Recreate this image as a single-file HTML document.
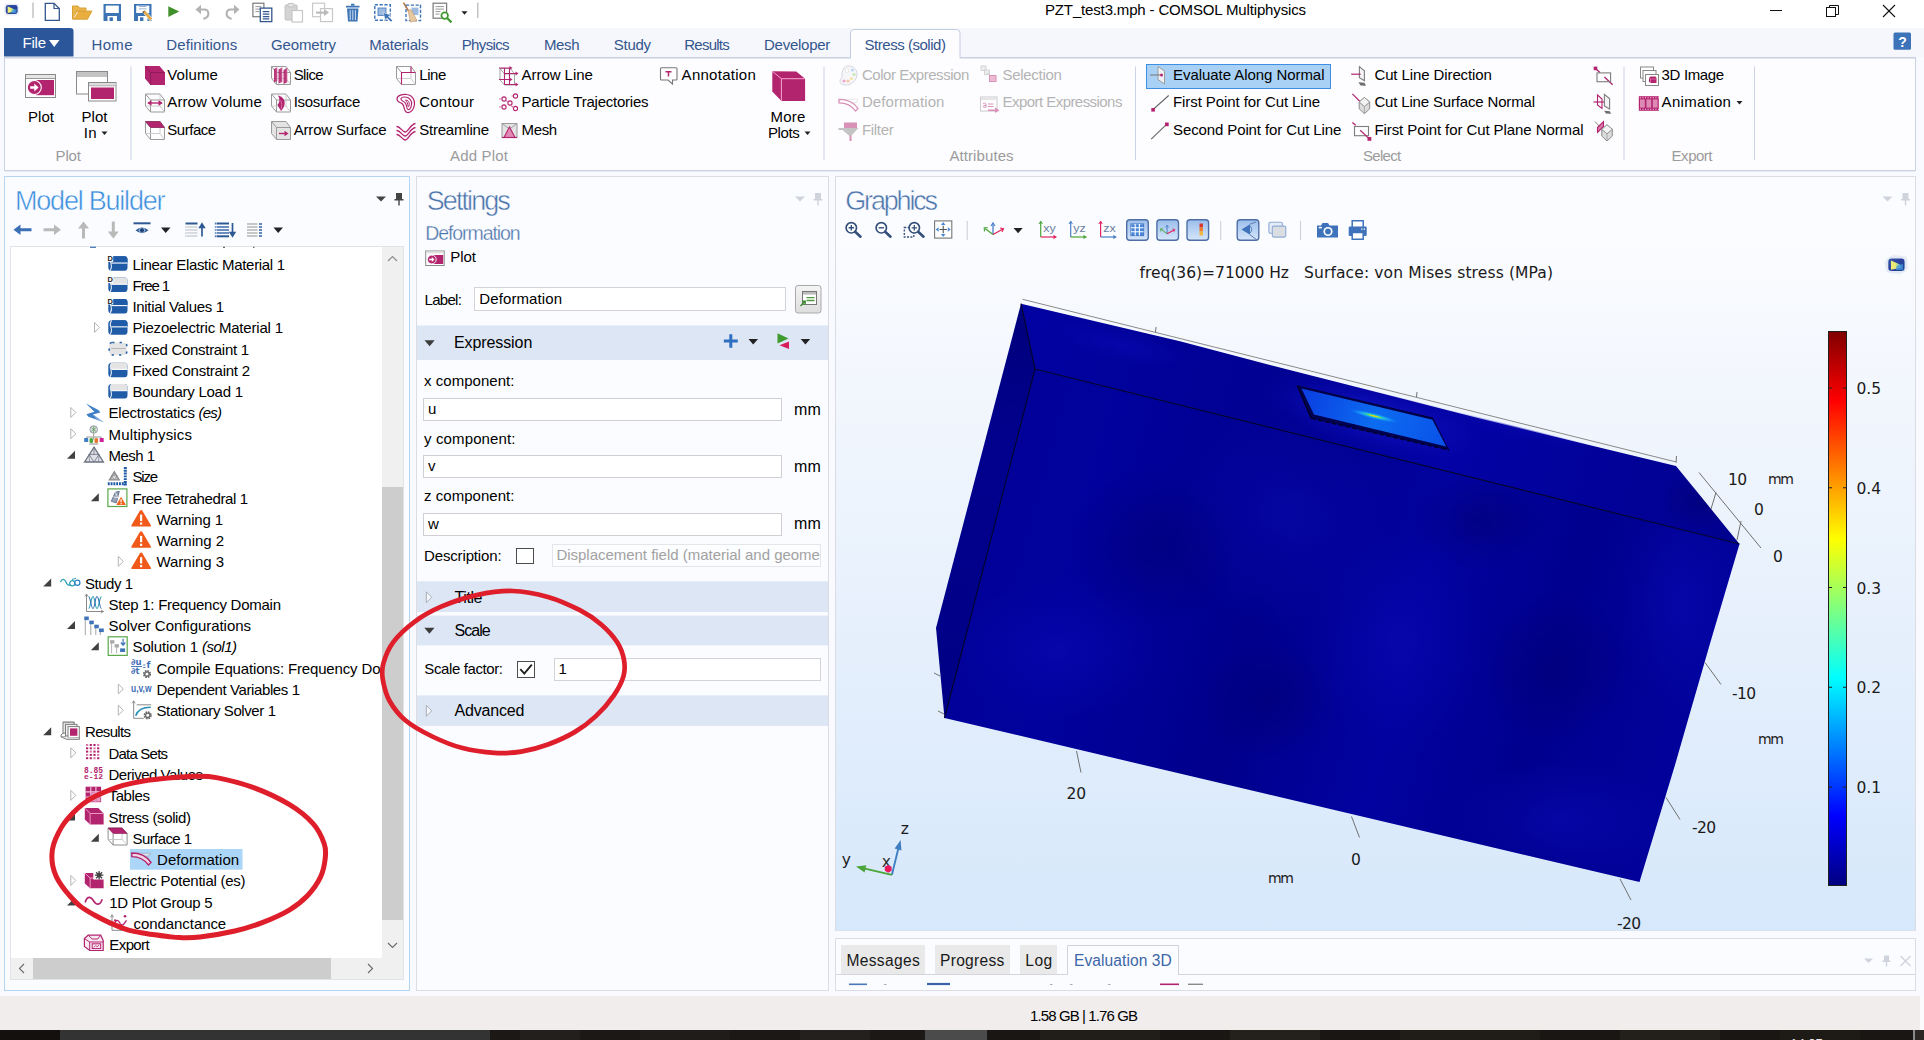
<!DOCTYPE html>
<html lang="en"><head><meta charset="utf-8"><title>PZT_test3.mph - COMSOL Multiphysics</title>
<style>
html,body{margin:0;padding:0;background:#f9faff;overflow:hidden}
body{width:1924px;height:1040px;position:relative;font-family:"Liberation Sans",sans-serif}
svg{position:absolute;left:0;top:0;display:block}
text{white-space:pre}
</style></head><body>
<svg width="1924" height="1040" viewBox="0 0 1924 1040">
<defs>
<linearGradient id="cl" x1="0" x2="1" y1="0" y2="0"><stop offset="0" stop-color="#f2ee7a"/><stop offset=".45" stop-color="#e6ea72"/><stop offset=".75" stop-color="#7cc8b0"/><stop offset="1" stop-color="#3a8ad8"/></linearGradient>
<linearGradient id="clb" x1="0" x2="1" y1="0" y2="1"><stop offset="0" stop-color="#3858a8"/><stop offset=".5" stop-color="#2a3f9c"/><stop offset="1" stop-color="#184a94"/></linearGradient>
<linearGradient id="btn" x1="0" x2="0" y1="0" y2="1"><stop offset="0" stop-color="#f4f4f4"/><stop offset="1" stop-color="#dedede"/></linearGradient>
<linearGradient id="tg" x1="0" x2="0" y1="0" y2="1"><stop offset="0" stop-color="#9bbdec"/><stop offset=".5" stop-color="#b7d2f4"/><stop offset="1" stop-color="#d6e6fa"/></linearGradient>
<linearGradient id="cv" x1="0" x2="0" y1="0" y2="1"><stop offset="0" stop-color="#fafbfe"/><stop offset="0.3" stop-color="#eff5fd"/><stop offset="0.65" stop-color="#e3eefc"/><stop offset="1" stop-color="#d6e8fb"/></linearGradient>
<linearGradient id="fr" gradientUnits="userSpaceOnUse" x1="950" y1="500" x2="1700" y2="700"><stop offset="0" stop-color="#020298"/><stop offset="0.18" stop-color="#01019d"/><stop offset="0.42" stop-color="#00008c"/><stop offset="0.62" stop-color="#0202a0"/><stop offset="0.8" stop-color="#00008e"/><stop offset="1" stop-color="#02029c"/></linearGradient>
<linearGradient id="tp" gradientUnits="userSpaceOnUse" x1="1030" y1="330" x2="1720" y2="520"><stop offset="0" stop-color="#0202a2"/><stop offset="0.35" stop-color="#010192"/><stop offset="0.6" stop-color="#0303a6"/><stop offset="1" stop-color="#010190"/></linearGradient>
<linearGradient id="lf" gradientUnits="userSpaceOnUse" x1="1025" y1="310" x2="940" y2="700"><stop offset="0" stop-color="#00007c"/><stop offset="0.35" stop-color="#01018e"/><stop offset="1" stop-color="#000086"/></linearGradient>
<radialGradient id="gl1"><stop offset="0" stop-color="#0a0ab4" stop-opacity=".55"/><stop offset="1" stop-color="#0a0ab4" stop-opacity="0"/></radialGradient>
<radialGradient id="gl2"><stop offset="0" stop-color="#000070" stop-opacity=".5"/><stop offset="1" stop-color="#000070" stop-opacity="0"/></radialGradient>
<clipPath id="cfr"><path d="M1035,369 L1739.5,544 L1639.5,882 L944.5,718 Z"/></clipPath>
<clipPath id="ctp"><path d="M1021,303.7 L1676,466 L1739.5,544 L1035,369 Z"/></clipPath>
<radialGradient id="gl3"><stop offset="0" stop-color="#1a2ad8" stop-opacity=".7"/><stop offset="0.6" stop-color="#1010c0" stop-opacity=".35"/><stop offset="1" stop-color="#0a0ab4" stop-opacity="0"/></radialGradient>
<linearGradient id="sl" gradientUnits="userSpaceOnUse" x1="1300" y1="390" x2="1450" y2="445"><stop offset="0" stop-color="#0a3ce0"/><stop offset="0.5" stop-color="#0c6cf0"/><stop offset="1" stop-color="#0a50e8"/></linearGradient>
<radialGradient id="hot"><stop offset="0" stop-color="#e08020"/><stop offset="0.12" stop-color="#e0e020"/><stop offset="0.3" stop-color="#30e0a0" stop-opacity=".9"/><stop offset="0.6" stop-color="#20c0ff" stop-opacity=".5"/><stop offset="1" stop-color="#1080ff" stop-opacity="0"/></radialGradient>
<linearGradient id="jet" x1="0" x2="0" y1="1" y2="0"><stop offset="0" stop-color="#000080"/><stop offset="0.125" stop-color="#0000ff"/><stop offset="0.375" stop-color="#00ffff"/><stop offset="0.625" stop-color="#ffff00"/><stop offset="0.875" stop-color="#ff0000"/><stop offset="1" stop-color="#800000"/></linearGradient>
</defs>
<rect x="0" y="0" width="1924" height="1040" fill="#f9faff"/>
<rect x="0" y="0" width="1924" height="28" fill="#ffffff"/>
<rect x="0" y="28" width="1924" height="29" fill="#f6f7fc"/>
<rect x="4.5" y="57.5" width="1911" height="113" fill="#fdfdff" stroke="#c9d1e2" stroke-width="1"/>
<rect x="1916" y="57" width="8" height="114" fill="#f9faff"/>
<rect x="0" y="171" width="1924" height="6" fill="#f9faff"/>
<rect x="0" y="996" width="1920" height="34" fill="#f0edec"/>
<rect x="1920" y="996" width="4" height="34" fill="#fbfbfd"/>
<rect x="0" y="1030" width="1924" height="10" fill="#181513"/>
<rect x="0" y="1030" width="60" height="10" fill="#13100e"/>
<rect x="60" y="1030" width="430" height="10" fill="#333333"/>
<rect x="490" y="1030" width="435" height="10" fill="#1b1816"/>
<rect x="925" y="1030" width="62" height="10" fill="#4b4b4b"/>
<rect x="987" y="1030" width="926" height="10" fill="#191613"/>
<rect x="520" y="1030" width="60" height="10" fill="#26221f" opacity=".8"/>
<rect x="640" y="1030" width="90" height="10" fill="#221e1b" opacity=".8"/>
<rect x="800" y="1030" width="70" height="10" fill="#27231f" opacity=".8"/>
<rect x="1040" y="1030" width="120" height="10" fill="#231f1c" opacity=".8"/>
<rect x="1230" y="1030" width="90" height="10" fill="#27231f" opacity=".8"/>
<rect x="1400" y="1030" width="140" height="10" fill="#221e1a" opacity=".8"/>
<rect x="1620" y="1030" width="100" height="10" fill="#26221e" opacity=".8"/>
<rect x="1780" y="1030" width="80" height="10" fill="#1f1b18" opacity=".8"/>
<rect x="1913" y="1030" width="2" height="10" fill="#8a8a8a"/>
<rect x="1915" y="1030" width="9" height="10" fill="#2a2725"/>
<rect x="4.5" y="176.5" width="405" height="814" fill="#fbfcff" stroke="#b5d4f1" stroke-width="1"/>
<rect x="416.5" y="176.5" width="412" height="814" fill="#fbfcff" stroke="#dcdde3" stroke-width="1"/>
<rect x="835.5" y="176.5" width="1080" height="754" fill="#fbfcff" stroke="#dcdde3" stroke-width="1"/>
<rect x="835.5" y="938.5" width="1080" height="52" fill="#fbfcff" stroke="#dcdde3" stroke-width="1"/>
<text x="1045" y="15" font-family="'Liberation Sans',sans-serif" font-size="15" fill="#000" textLength="261.0" lengthAdjust="spacing">PZT_test3.mph - COMSOL Multiphysics</text>
<line x1="1770" y1="10.5" x2="1782" y2="10.5" stroke="#111" stroke-width="1"/>
<rect x="1826.5" y="7.5" width="9" height="9" fill="none" stroke="#111" stroke-width="1"/>
<path d="M1829.5,7.5 V5.5 H1838.5 V14.5 H1835.5" fill="none" stroke="#111" stroke-width="1"/>
<line x1="1883" y1="5" x2="1895" y2="17" stroke="#111" stroke-width="1.1"/>
<line x1="1895" y1="5" x2="1883" y2="17" stroke="#111" stroke-width="1.1"/>
<rect x="1893.5" y="32.5" width="17.5" height="17.3" fill="#3c73b9" rx="1.5"/>
<text x="1902.5" y="46.5" font-family="'Liberation Sans',sans-serif" font-size="14" fill="#fff" text-anchor="middle" font-weight="bold">?</text>
<path d="M4,28 H70 Q73.5,28 73.5,31 V56.5 H4 Z" fill="#2b579a"/>
<text x="22.5" y="48.3" font-family="'Liberation Sans',sans-serif" font-size="15" fill="#fff" textLength="23.5" lengthAdjust="spacing">File</text>
<path d="M49,40 H59.5 L54.2,47 Z" fill="#fff"/>
<text x="91.5" y="50" font-family="'Liberation Sans',sans-serif" font-size="15" fill="#33568e" textLength="41.0" lengthAdjust="spacing">Home</text>
<text x="166.3" y="50" font-family="'Liberation Sans',sans-serif" font-size="15" fill="#33568e" textLength="70.9" lengthAdjust="spacing">Definitions</text>
<text x="271" y="50" font-family="'Liberation Sans',sans-serif" font-size="15" fill="#33568e" textLength="65.0" lengthAdjust="spacing">Geometry</text>
<text x="369.3" y="50" font-family="'Liberation Sans',sans-serif" font-size="15" fill="#33568e" textLength="59.2" lengthAdjust="spacing">Materials</text>
<text x="461.7" y="50" font-family="'Liberation Sans',sans-serif" font-size="15" fill="#33568e" textLength="47.9" lengthAdjust="spacing">Physics</text>
<text x="544" y="50" font-family="'Liberation Sans',sans-serif" font-size="15" fill="#33568e" textLength="35.5" lengthAdjust="spacing">Mesh</text>
<text x="613.8" y="50" font-family="'Liberation Sans',sans-serif" font-size="15" fill="#33568e" textLength="37.2" lengthAdjust="spacing">Study</text>
<text x="684.2" y="50" font-family="'Liberation Sans',sans-serif" font-size="15" fill="#33568e" textLength="45.6" lengthAdjust="spacing">Results</text>
<text x="764" y="50" font-family="'Liberation Sans',sans-serif" font-size="15" fill="#33568e" textLength="66.3" lengthAdjust="spacing">Developer</text>
<line x1="5" y1="58.4" x2="1915" y2="58.4" stroke="#dde2ee" stroke-width="1"/>
<line x1="5" y1="171.4" x2="1915" y2="171.4" stroke="#e2e6f0" stroke-width="1"/>
<path d="M850.5,57.5 V33 Q850.5,29.5 854,29.5 H956.5 Q960,29.5 960,33 V57.5" fill="#fdfdff" stroke="#c3cde0" stroke-width="1"/>
<rect x="851" y="57" width="108.5" height="2.2" fill="#fdfdff"/>
<text x="864.5" y="50" font-family="'Liberation Sans',sans-serif" font-size="15" fill="#33568e" textLength="81.5" lengthAdjust="spacing">Stress (solid)</text>
<line x1="131" y1="66.5" x2="131" y2="160" stroke="#ccd3e4" stroke-width="1"/>
<line x1="824" y1="66.5" x2="824" y2="160" stroke="#ccd3e4" stroke-width="1"/>
<line x1="1135.5" y1="66.5" x2="1135.5" y2="160" stroke="#ccd3e4" stroke-width="1"/>
<line x1="1624" y1="66.5" x2="1624" y2="160" stroke="#ccd3e4" stroke-width="1"/>
<line x1="1754.5" y1="66.5" x2="1754.5" y2="160" stroke="#ccd3e4" stroke-width="1"/>
<text x="55.6" y="161" font-family="'Liberation Sans',sans-serif" font-size="15" fill="#9b9b9b" textLength="25.2" lengthAdjust="spacing">Plot</text>
<text x="450" y="161" font-family="'Liberation Sans',sans-serif" font-size="15" fill="#9b9b9b" textLength="58.0" lengthAdjust="spacing">Add Plot</text>
<text x="949.4" y="161" font-family="'Liberation Sans',sans-serif" font-size="15" fill="#9b9b9b" textLength="64.2" lengthAdjust="spacing">Attributes</text>
<text x="1363" y="161" font-family="'Liberation Sans',sans-serif" font-size="15" fill="#9b9b9b" textLength="38.2" lengthAdjust="spacing">Select</text>
<text x="1671.6" y="161" font-family="'Liberation Sans',sans-serif" font-size="15" fill="#9b9b9b" textLength="40.9" lengthAdjust="spacing">Export</text>
<text x="28" y="122" font-family="'Liberation Sans',sans-serif" font-size="15" fill="#000" textLength="26.0" lengthAdjust="spacing">Plot</text>
<text x="81.5" y="122" font-family="'Liberation Sans',sans-serif" font-size="15" fill="#000" textLength="26.0" lengthAdjust="spacing">Plot</text>
<text x="83.8" y="138" font-family="'Liberation Sans',sans-serif" font-size="15" fill="#000" textLength="12.7" lengthAdjust="spacing">In</text>
<path d="M101.5,131.5 H107.5 L104.5,135 Z" fill="#222"/>
<text x="770.4" y="122" font-family="'Liberation Sans',sans-serif" font-size="15" fill="#000" textLength="35.0" lengthAdjust="spacing">More</text>
<text x="768" y="138" font-family="'Liberation Sans',sans-serif" font-size="15" fill="#000" textLength="31.7" lengthAdjust="spacing">Plots</text>
<path d="M804.5,131.5 H810.5 L807.5,135 Z" fill="#222"/>
<text x="167.3" y="79.8" font-family="'Liberation Sans',sans-serif" font-size="15" fill="#000" textLength="50.6" lengthAdjust="spacing">Volume</text>
<text x="167.3" y="107.4" font-family="'Liberation Sans',sans-serif" font-size="15" fill="#000" textLength="94.5" lengthAdjust="spacing">Arrow Volume</text>
<text x="167.3" y="134.8" font-family="'Liberation Sans',sans-serif" font-size="15" fill="#000" textLength="48.9" lengthAdjust="spacing">Surface</text>
<text x="293.7" y="79.8" font-family="'Liberation Sans',sans-serif" font-size="15" fill="#000" textLength="30.0" lengthAdjust="spacing">Slice</text>
<text x="293.7" y="107.4" font-family="'Liberation Sans',sans-serif" font-size="15" fill="#000" textLength="66.6" lengthAdjust="spacing">Isosurface</text>
<text x="293.7" y="134.8" font-family="'Liberation Sans',sans-serif" font-size="15" fill="#000" textLength="92.9" lengthAdjust="spacing">Arrow Surface</text>
<text x="419.2" y="79.8" font-family="'Liberation Sans',sans-serif" font-size="15" fill="#000" textLength="27.2" lengthAdjust="spacing">Line</text>
<text x="419.2" y="107.4" font-family="'Liberation Sans',sans-serif" font-size="15" fill="#000" textLength="54.8" lengthAdjust="spacing">Contour</text>
<text x="419.2" y="134.8" font-family="'Liberation Sans',sans-serif" font-size="15" fill="#000" textLength="69.8" lengthAdjust="spacing">Streamline</text>
<text x="521.6" y="79.8" font-family="'Liberation Sans',sans-serif" font-size="15" fill="#000" textLength="71.2" lengthAdjust="spacing">Arrow Line</text>
<text x="521.6" y="107.4" font-family="'Liberation Sans',sans-serif" font-size="15" fill="#000" textLength="126.9" lengthAdjust="spacing">Particle Trajectories</text>
<text x="521.6" y="134.8" font-family="'Liberation Sans',sans-serif" font-size="15" fill="#000" textLength="35.6" lengthAdjust="spacing">Mesh</text>
<text x="681.6" y="79.8" font-family="'Liberation Sans',sans-serif" font-size="15" fill="#000" textLength="74.2" lengthAdjust="spacing">Annotation</text>
<text x="861.9" y="79.8" font-family="'Liberation Sans',sans-serif" font-size="15" fill="#b4b4b4" textLength="107.4" lengthAdjust="spacing">Color Expression</text>
<text x="861.9" y="107.4" font-family="'Liberation Sans',sans-serif" font-size="15" fill="#b4b4b4" textLength="82.5" lengthAdjust="spacing">Deformation</text>
<text x="861.9" y="134.8" font-family="'Liberation Sans',sans-serif" font-size="15" fill="#b4b4b4" textLength="31.9" lengthAdjust="spacing">Filter</text>
<text x="1002.6" y="79.8" font-family="'Liberation Sans',sans-serif" font-size="15" fill="#b4b4b4" textLength="59.2" lengthAdjust="spacing">Selection</text>
<text x="1002.6" y="107.4" font-family="'Liberation Sans',sans-serif" font-size="15" fill="#b4b4b4" textLength="119.8" lengthAdjust="spacing">Export Expressions</text>
<rect x="1146.5" y="64.5" width="184" height="24" fill="#a9d1f5" stroke="#3d8fe4" stroke-width="1"/>
<text x="1173" y="79.8" font-family="'Liberation Sans',sans-serif" font-size="15" fill="#000" textLength="151.5" lengthAdjust="spacing">Evaluate Along Normal</text>
<text x="1173" y="107.4" font-family="'Liberation Sans',sans-serif" font-size="15" fill="#000" textLength="147.2" lengthAdjust="spacing">First Point for Cut Line</text>
<text x="1173" y="134.8" font-family="'Liberation Sans',sans-serif" font-size="15" fill="#000" textLength="168.3" lengthAdjust="spacing">Second Point for Cut Line</text>
<text x="1374.4" y="79.8" font-family="'Liberation Sans',sans-serif" font-size="15" fill="#000" textLength="117.5" lengthAdjust="spacing">Cut Line Direction</text>
<text x="1374.4" y="107.4" font-family="'Liberation Sans',sans-serif" font-size="15" fill="#000" textLength="160.6" lengthAdjust="spacing">Cut Line Surface Normal</text>
<text x="1374.4" y="134.8" font-family="'Liberation Sans',sans-serif" font-size="15" fill="#000" textLength="209.2" lengthAdjust="spacing">First Point for Cut Plane Normal</text>
<text x="1661.6" y="79.8" font-family="'Liberation Sans',sans-serif" font-size="15" fill="#000" textLength="62.6" lengthAdjust="spacing">3D Image</text>
<text x="1661.6" y="107.4" font-family="'Liberation Sans',sans-serif" font-size="15" fill="#000" textLength="69.3" lengthAdjust="spacing">Animation</text>
<path d="M1736.5,101 H1742.5 L1739.5,104.5 Z" fill="#222"/>
<g transform="translate(25 74)"><rect x="0.5" y="0.5" width="30" height="23" fill="#fff" stroke="#8a8a8a"/><rect x="1" y="1" width="29" height="3.2" fill="#e6e6e6"/><path d="M1,4.5 H30" stroke="#9a9a9a"/><rect x="11" y="6" width="18" height="15.2" fill="#b3246f"/><circle cx="9.3" cy="13.5" r="7" fill="#b3246f" stroke="#fff" stroke-width="1.1"/><path d="M5.2,12.3 H9.3 V9.6 L13.6,13.5 L9.3,17.4 V14.7 H5.2 Z" fill="#fff"/></g>
<g transform="translate(76 71)"><rect x="0.5" y="0.5" width="31" height="22.5" fill="#fff" stroke="#8a8a8a"/><rect x="1" y="1" width="30" height="5" fill="#c4c4c4"/><rect x="12.5" y="11.5" width="27.5" height="18.5" fill="#fff" stroke="#8a8a8a"/><rect x="13" y="12" width="26.5" height="2.5" fill="#dcdcdc"/><path d="M13,14.8 H39.5" stroke="#9a9a9a" stroke-width=".8"/><rect x="15" y="16.5" width="23" height="11.5" fill="#b3246f"/></g>
<g transform="translate(145 66)"><path d="M0,0 H14.5 L20,6.5 V19 H5.5 L0,12.5 Z" fill="#b3246f"/><path d="M0.3,0.3 L5.5,6.5 H20 M5.5,6.5 V19" fill="none" stroke="#8c1a55" stroke-width="0.9"/></g>
<g transform="translate(145 93.5)"><path d="M0.5,0.5 H15 L19.5,6.5 V18.5 H5.5 L0.5,12.5 Z M0.5,0.5 L5.5,6.5 H19.5 M5.5,6.5 V18.5" fill="none" stroke="#9a9a9a" stroke-width="1"/><path d="M15,0.5 V12.5 L19.5,18.5 M0.5,12.5 H15" fill="none" stroke="#c8c8c8" stroke-width="0.9"/><path d="M3.5,9.5 H16.5" stroke="#b3246f" stroke-width="1.4"/><path d="M6.5,6.8 L2.2,9.5 L6.5,12.2 Z M13.5,6.8 L17.8,9.5 L13.5,12.2 Z" fill="#b3246f"/></g>
<g transform="translate(145 121)"><path d="M0.5,0.5 H15 L19.5,6.5 V18.5 H5.5 L0.5,12.5 Z M0.5,0.5 L5.5,6.5 H19.5 M5.5,6.5 V18.5" fill="none" stroke="#9a9a9a" stroke-width="1"/><path d="M15,0.5 V12.5 L19.5,18.5 M0.5,12.5 H15" fill="none" stroke="#c8c8c8" stroke-width="0.9"/><path d="M0.5,0.5 H15 L19.5,6.5 H5.5 Z" fill="#b3246f" stroke="#8c1a55" stroke-width=".6"/></g>
<g transform="translate(271 66)"><path d="M0.5,0.5 H15 L19.5,6.5 V18.5 H5.5 L0.5,12.5 Z M0.5,0.5 L5.5,6.5 H19.5 M5.5,6.5 V18.5" fill="none" stroke="#9a9a9a" stroke-width="1"/><path d="M15,0.5 V12.5 L19.5,18.5 M0.5,12.5 H15" fill="none" stroke="#c8c8c8" stroke-width="0.9"/><path d="M3,3 L6,1.5 V15 L3,16.5 Z M7.5,3.5 L11,1.5 V16 L7.5,17.5 Z M12.5,4 L16,2 V16.5 L12.5,18 Z" fill="#b3246f" opacity=".9"/><path d="M6,1.5 V15 M11,1.5 V16 M16,2 V16.5" stroke="#d978a8" stroke-width=".8"/></g>
<g transform="translate(271 93.5)"><path d="M0.5,0.5 H15 L19.5,6.5 V18.5 H5.5 L0.5,12.5 Z M0.5,0.5 L5.5,6.5 H19.5 M5.5,6.5 V18.5" fill="none" stroke="#9a9a9a" stroke-width="1"/><path d="M15,0.5 V12.5 L19.5,18.5 M0.5,12.5 H15" fill="none" stroke="#c8c8c8" stroke-width="0.9"/><path d="M7,2 C12,3 14.5,7 13.5,11 C13,14 11.5,16 10,17.5 C9,15 7,13.5 6.5,11 C9,9 9,5 7,2 Z" fill="#b3246f"/><path d="M9.5,7 C11,9 11,13 10,16" stroke="#d978a8" fill="none" stroke-width=".9"/></g>
<g transform="translate(271 121)"><path d="M0.5,0.5 H15 L19.5,6.5 V18.5 H5.5 L0.5,12.5 Z" fill="#e4e4e4" stroke="#9a9a9a"/><path d="M0.5,0.5 L5.5,6.5 H19.5 M5.5,6.5 V18.5" fill="none" stroke="#9a9a9a"/><path d="M8,12.5 H15" stroke="#b3246f" stroke-width="1.4"/><path d="M13.5,9.8 L17.5,12.5 L13.5,15.2 Z" fill="#b3246f"/></g>
<g transform="translate(396 66)"><path d="M0.5,0.5 H15 L19.5,6.5 V18.5 H5.5 L0.5,12.5 Z M0.5,0.5 L5.5,6.5 H19.5 M5.5,6.5 V18.5" fill="none" stroke="#9a9a9a" stroke-width="1"/><path d="M15,0.5 V12.5 L19.5,18.5 M0.5,12.5 H15" fill="none" stroke="#c8c8c8" stroke-width="0.9"/><path d="M5.5,18.5 V6.5 H19.5 M15,0.5 V6" fill="none" stroke="#b3246f" stroke-width="1.1"/></g>
<g transform="translate(396 93.5)"><path d="M1,5.5 C1,1.5 7,0.5 11,1 C16,1.5 19,6 18.5,11 C18,15.5 15,19.5 11.5,19 C7.5,18.5 9,13 6.5,10.5 C4.5,8.5 1,9 1,5.5 Z" fill="none" stroke="#b3246f" stroke-width="1.2"/><path d="M5,5 C6,3 10,3 12.5,4.5 C15.5,6.5 16,10.5 15,13.5 C14,16.5 11.5,17 11,14.5 C10.5,11 9.5,9 7.5,8 C6,7.2 4.5,6.5 5,5 Z" fill="none" stroke="#b3246f" stroke-width="1.1"/><path d="M9.5,6.5 C12,6.5 13.5,8.5 13.3,11 C13.2,13 12.3,14 12,12.5 C11.8,10 11,8 9.5,6.5 Z" fill="none" stroke="#b3246f" stroke-width="1"/></g>
<g transform="translate(396 121)"><path d="M0.5,5.5 C4,5.0 6,10.5 9,11.0 C12,11.5 14,3.5 19.5,2.5" fill="none" stroke="#b3246f" stroke-width="1.3"/><path d="M0.5,9.5 C4,9.0 6,14.5 9,15.0 C12,15.5 14,7.5 19.5,6.5" fill="none" stroke="#b3246f" stroke-width="1.3"/><path d="M0.5,13.5 C4,13.0 6,18.5 9,19.0 C12,19.5 14,11.5 19.5,10.5" fill="none" stroke="#b3246f" stroke-width="1.3"/></g>
<g transform="translate(498.5 66)"><path d="M1.5,2.5 H12 L16,8 V19 H6 L1.5,14 Z M1.5,2.5 L6,8 H16 M6,8 V19" fill="none" stroke="#9a9a9a" stroke-width=".9"/><path d="M0.5,2 H12 M6,7.5 H18 M0.5,13.5 H12 M6,18.5 H18 M6,2 V18.5 M11,2 V18.5" stroke="#b3246f" stroke-width="1.1" fill="none"/><path d="M11,0 L14,2 L11,4 Z M17,5.5 L20,7.5 L17,9.5 Z M11,11.5 L14,13.5 L11,15.5 Z M17,16.5 L20,18.5 L17,20.5 Z" fill="#b3246f"/></g>
<g transform="translate(498.5 93.5)"><circle cx="5.5" cy="5.5" r="2.1" fill="none" stroke="#b3246f" stroke-width="1.1"/><circle cx="11.5" cy="9.5" r="2.1" fill="none" stroke="#b3246f" stroke-width="1.1"/><circle cx="17" cy="2.5" r="2.1" fill="none" stroke="#b3246f" stroke-width="1.1"/><circle cx="5.5" cy="13.5" r="2.1" fill="none" stroke="#b3246f" stroke-width="1.1"/><circle cx="17" cy="15" r="2.1" fill="none" stroke="#b3246f" stroke-width="1.1"/><path d="M0.5,5.5 H3 M13,2.5 H14.5 M7.5,7 L9.5,8.5 M0.5,13.5 H3 M12.5,12 L15,14" stroke="#d978a8" stroke-width="1.1"/></g>
<g transform="translate(501.5 123)"><rect x="0.5" y="0.5" width="15" height="14" fill="#e2e2e2" stroke="#9a9a9a"/><path d="M0.5,0.5 L8,6 L15.5,0.5" fill="none" stroke="#9a9a9a" stroke-width=".9"/><path d="M8,4 L13.5,14.5 H2.5 Z" fill="#e08ab4" stroke="#b3246f" stroke-width="1.1"/><path d="M0.5,14.5 H15.5" stroke="#b3246f" stroke-width="1.2"/></g>
<g transform="translate(660 67)"><path d="M1.5,0.8 H16 Q17,0.8 17,1.8 V12 Q17,13 16,13 H12.5 V17 L8,13 H1.5 Q0.5,13 0.5,12 V1.8 Q0.5,0.8 1.5,0.8 Z" fill="#fff" stroke="#777" stroke-width="1.1"/><path d="M5.5,4.7 H11.5 M8.5,4.7 V9.5" stroke="#b3246f" stroke-width="1.5"/></g>
<g transform="translate(772.3 71.2)"><path d="M0,0 L24,0.4 L32.8,7.5 V29.7 H9.1 L0,20.4 Z" fill="#b3246f"/><path d="M0.2,0.2 L9.1,7.5 H32.8 M9.1,7.5 V29.7" fill="none" stroke="#f7a6cf" stroke-width="1"/></g>
<g opacity=".5">
<g transform="translate(839.5 65.5)"><path d="M9,0.5 C14,0.5 17.5,4 17.5,8.5 C17.5,14.5 12.5,19.5 6,19.5 C2.5,19.5 0.5,18 0.5,15.5 C0.5,13.5 2.5,13 2.5,11 C2.5,5 4,0.5 9,0.5 Z" fill="#f1f1f4" stroke="#aab" stroke-width="1"/><circle cx="7.5" cy="5" r="2" fill="#fff" stroke="#bbb" stroke-width=".6"/><circle cx="13" cy="4.5" r="1.6" fill="#7ab0ee"/><circle cx="14.5" cy="9" r="1.6" fill="#8fd36a"/><circle cx="12" cy="13" r="1.6" fill="#f2c84a"/><circle cx="8.5" cy="15.5" r="1.6" fill="#f08a4a"/><circle cx="4.5" cy="15.5" r="1.6" fill="#e050a0"/></g>
<g transform="translate(838.5 98.5)"><path d="M0.5,0.8 H19.5 L18,4 C13,4 8,4 0.5,4 Z" fill="#fff" stroke="#c8c8c8" stroke-width=".8"/><path d="M0.5,0.8 C9,0.8 15,3 19.5,10 L17,12.5 C13.5,7.5 8,4.3 0.5,4.3 Z" fill="#fff" stroke="#b3246f" stroke-width="1.3"/></g>
<g transform="translate(838.5 122.5)"><rect x="5.5" y="0" width="13" height="5.6" fill="#b3246f"/><path d="M0,5.6 H20 L12.5,13.5 H11 L4,7.5 H0 Z" fill="#8a8a8a"/><rect x="11" y="13" width="2" height="5.5" fill="#b3246f"/></g>
<g transform="translate(980 65.5)"><rect x="1" y="0.5" width="5" height="4.5" fill="#ddd" stroke="#9a9a9a" stroke-width=".8"/><rect x="4.5" y="4.5" width="5" height="4.5" fill="#ddd" stroke="#9a9a9a" stroke-width=".8"/><path d="M7,7 L11,11" stroke="#9a9a9a"/><rect x="9.5" y="10" width="6.5" height="6" fill="#d978a8" stroke="#b3246f" stroke-width="1"/></g>
<g transform="translate(980 96.5)"><rect x="0.5" y="0.5" width="16.5" height="14" fill="#fff" stroke="#9a9a9a"/><rect x="1" y="1" width="15.5" height="2.5" fill="#ccc"/><path d="M8,7.5 H13.5 M8,10 H13.5" stroke="#b3246f" stroke-width="1"/><path d="M3,7 Q5,6 6,7.5 V11 M6,9 Q3,8.5 3,10 Q3.5,11.5 6,10.5" fill="none" stroke="#b3246f" stroke-width=".9"/><path d="M8,13.8 H16" stroke="#b3246f" stroke-width="1.6"/><path d="M15,11 L19.5,13.8 L15,16.6 Z" fill="#b3246f"/></g>
</g>
<g transform="translate(1150 66)"><path d="M8,0.5 L14.5,5 V18 L8,13.5 Z" fill="#eef2f8" stroke="#9a9a9a" stroke-width="1"/><path d="M0,9 H10" stroke="#777" stroke-width="1"/><circle cx="11.5" cy="9" r="1.5" fill="#b3246f"/></g>
<g transform="translate(1150 94)"><path d="M2.5,16 L18.7,1.5" stroke="#666" stroke-width="1.1"/><rect x="1.3" y="14" width="3.6" height="3.6" fill="#b3246f"/></g>
<g transform="translate(1150 121.5)"><path d="M1.2,17.7 L16.8,2.7" stroke="#666" stroke-width="1.1"/><rect x="15" y="1" width="3.7" height="3.7" fill="#b3246f"/></g>
<g transform="translate(1351 66)"><path d="M8.4,0.6 L13.4,4.7 V14.7 L8.4,11.8 Z" fill="#f4f4f6" stroke="#7d7d7d" stroke-width="1.1"/><path d="M0.2,8.2 H9.7" stroke="#b3246f" stroke-width="1.2"/><path d="M7.5,16.3 L13.5,16.8 L15,19.8 L9.5,19.5 Z" fill="#6d6d6d"/></g>
<g transform="translate(0 0)"><path d="M1352.4,93.9 L1360,101.5" stroke="#b3246f" stroke-width="1.2"/><path d="M1364.4,97.5 L1369.7,102.0 V108.8 L1364.4,113.7 L1359.2,108.8 V102.0 Z" fill="#dcdcdc" stroke="#8a8a8a" stroke-width="1"/><path d="M1359.2,102.0 L1364.4,106.5 L1369.7,102.0 M1364.4,106.5 V113.7" fill="none" stroke="#9a9a9a" stroke-width=".8"/><path d="M1364.4,97.5 L1369.7,102.0 L1364.4,106.5 L1359.2,102.0 Z" fill="#f3f3f3" stroke="#8a8a8a" stroke-width=".8"/></g>
<g transform="translate(0 0)"><rect x="1354.5" y="126.5" width="14" height="9.2" fill="none" stroke="#7d7d7d" stroke-width="1.1"/><path d="M1352.4,122.4 L1355.7,125.3 M1360.2,130.2 L1368.3,137.9" stroke="#b3246f" stroke-width="1.3"/><rect x="1367.5" y="137" width="3.8" height="3.8" fill="#b3246f"/></g>
<g transform="translate(0 0)"><rect x="1593.7" y="66.6" width="3.6" height="3.6" fill="#b3246f"/><path d="M1596.5,69.5 L1600,72.6 M1604.4,77 L1612.7,84.8" stroke="#b3246f" stroke-width="1.3"/><rect x="1597" y="72.9" width="13.6" height="8.8" fill="none" stroke="#7d7d7d" stroke-width="1.1"/></g>
<g transform="translate(0 0)"><path d="M1597.5,95 L1602,99 V108.5 L1597.5,105 Z" fill="none" stroke="#b3246f" stroke-width="1.1"/><path d="M1593.5,102 H1606" stroke="#b3246f" stroke-width="1.2"/><path d="M1604.4,94.5 L1609.6,98.6 V109 L1604.4,106 Z" fill="#f4f4f6" stroke="#7d7d7d" stroke-width="1.1"/><path d="M1604,110.8 L1609.8,111.2 L1611.2,113.8 L1606,113.6 Z" fill="#6d6d6d"/></g>
<g transform="translate(0 0)"><path d="M1595,121.5 L1600,127" stroke="#888" stroke-width="1"/><path d="M1597.5,127.5 L1603.5,121.5 V126.5 L1597.5,132.5 Z" fill="#d978a8" stroke="#b3246f" stroke-width="1.1"/><path d="M1607,124.80000000000001 L1612.3,129.3 V136.10000000000002 L1607,141.0 L1601.8,136.10000000000002 V129.3 Z" fill="#dcdcdc" stroke="#8a8a8a" stroke-width="1"/><path d="M1601.8,129.3 L1607,133.8 L1612.3,129.3 M1607,133.8 V141.0" fill="none" stroke="#9a9a9a" stroke-width=".8"/><path d="M1607,124.80000000000001 L1612.3,129.3 L1607,133.8 L1601.8,129.3 Z" fill="#f3f3f3" stroke="#8a8a8a" stroke-width=".8"/></g>
<g transform="translate(1640 66.5)"><rect x="0.5" y="0.5" width="13" height="11" fill="#fff" stroke="#888"/><rect x="3" y="4" width="13" height="11" fill="#fff" stroke="#888"/><rect x="5.5" y="8" width="13" height="11" fill="#fff" stroke="#888"/><path d="M9,11.5 L10.5,10 H15.5 L16.5,11.5 V16.5 H10.5 L9,15 Z" fill="#b3246f"/><path d="M9,11.5 L10.5,12.5 H16.5 M10.5,12.5 V16.5" stroke="#e58fbc" stroke-width=".6" fill="none"/></g>
<g transform="translate(1638.8 96.2)"><rect x="0" y="0" width="20" height="14.6" fill="#b3246f"/><rect x="1.2" y="3.2" width="4.8" height="8.2" fill="#dd8ab5"/><rect x="7.6000000000000005" y="3.2" width="4.8" height="8.2" fill="#dd8ab5"/><rect x="14.0" y="3.2" width="4.8" height="8.2" fill="#dd8ab5"/><rect x="1.0" y="1" width="1.1" height="1.1" fill="#f6c6de"/><rect x="1.0" y="12.5" width="1.1" height="1.1" fill="#f6c6de"/><rect x="3.6" y="1" width="1.1" height="1.1" fill="#f6c6de"/><rect x="3.6" y="12.5" width="1.1" height="1.1" fill="#f6c6de"/><rect x="6.2" y="1" width="1.1" height="1.1" fill="#f6c6de"/><rect x="6.2" y="12.5" width="1.1" height="1.1" fill="#f6c6de"/><rect x="8.8" y="1" width="1.1" height="1.1" fill="#f6c6de"/><rect x="8.8" y="12.5" width="1.1" height="1.1" fill="#f6c6de"/><rect x="11.4" y="1" width="1.1" height="1.1" fill="#f6c6de"/><rect x="11.4" y="12.5" width="1.1" height="1.1" fill="#f6c6de"/><rect x="14.0" y="1" width="1.1" height="1.1" fill="#f6c6de"/><rect x="14.0" y="12.5" width="1.1" height="1.1" fill="#f6c6de"/><rect x="16.6" y="1" width="1.1" height="1.1" fill="#f6c6de"/><rect x="16.6" y="12.5" width="1.1" height="1.1" fill="#f6c6de"/><rect x="19.2" y="1" width="1.1" height="1.1" fill="#f6c6de"/><rect x="19.2" y="12.5" width="1.1" height="1.1" fill="#f6c6de"/></g>
<g transform="translate(5.8 5) scale(1)"><rect x="-1.6" y="-1.6" width="15" height="12.2" rx="4" fill="#dfe6f6" opacity=".75"/><rect x="0" y="0" width="11.8" height="9" rx="2.4" fill="url(#clb)"/><path d="M1.9,1.4 L8.6,4.2 L9.4,6.6 L1.9,8 Z" fill="url(#cl)"/><path d="M6,5.2 L10.6,4 V8 L5.5,8.2 Z" fill="#4a9ae0" opacity=".75"/></g>
<line x1="33" y1="2.5" x2="33" y2="18" stroke="#b5b5b5" stroke-width="1.2"/>
<g transform="translate(44.5 2.5)"><path d="M0.8,0.8 H9.5 L14.8,6 V17.8 H0.8 Z" fill="#fff" stroke="#33568e" stroke-width="1.3"/><path d="M9.5,0.8 V6 H14.8" fill="none" stroke="#33568e" stroke-width="1.2"/></g>
<g transform="translate(72 5.5)"><path d="M0.5,13.5 V0.5 H6 L7.5,2.5 H14 V5" fill="#e9b64d" stroke="#d9a033" stroke-width="1"/><path d="M0.8,13.8 L5,5.5 H20 L15.5,13.8 Z" fill="#e9ae3f" stroke="#d39a2c" stroke-width=".8"/><path d="M2,12 L5.6,6.5" stroke="#fff" stroke-width=".9"/></g>
<g transform="translate(103.5 4)"><path d="M0,0 H17.5 V17 H0 Z" fill="#3d74b5"/><rect x="2.2" y="1.6" width="13.1" height="7.4" fill="#fff"/><rect x="4" y="12" width="9.5" height="5" fill="#fff"/><rect x="6" y="13.3" width="3.4" height="3.7" fill="#3d74b5"/></g>
<g transform="translate(134 4)"><path d="M0,0 H17.5 V17 H0 Z" fill="#3d74b5"/><rect x="2.2" y="1.6" width="13.1" height="7.4" fill="#fff"/><rect x="4" y="12" width="9.5" height="5" fill="#fff"/><rect x="6" y="13.3" width="3.4" height="3.7" fill="#3d74b5"/><path d="M5,2.5 H12.5 M5,4.8 H12.5" stroke="#9fb7d6" stroke-width="1"/><path d="M8.5,8 L11,6.2 L18.5,14.5 L16,16.8 Z" fill="#e5a94a" stroke="#fff" stroke-width=".6"/><path d="M8.5,8 L9,10 L11,6.2Z" fill="#444"/></g>
<path d="M168.3,6.3 L179.2,11.6 L168.3,17 Z" fill="#3f8f2a"/>
<g transform="translate(195.5 4)"><path d="M3.5,5.5 H9 C13.5,5.5 14,11 11,13.5 L8,15" fill="none" stroke="#b3b3b3" stroke-width="2"/><path d="M0,5.5 L5.5,0.8 V10.2 Z" fill="#b3b3b3"/></g>
<g transform="translate(224 4)"><path d="M12,5.5 H6.5 C2,5.5 1.5,11 4.5,13.5 L7.5,15" fill="none" stroke="#b3b3b3" stroke-width="2"/><path d="M15.5,5.5 L10,0.8 V10.2 Z" fill="#b3b3b3"/></g>
<g transform="translate(252.3 2.6)"><rect x="0.6" y="0.6" width="11" height="13.5" fill="#fff" stroke="#7a7a7a" stroke-width="1.2"/><path d="M3,4 H9 M3,6.5 H9 M3,9 H7" stroke="#999" stroke-width="1"/><rect x="8" y="5.5" width="11.5" height="13.5" fill="#fff" stroke="#33568e" stroke-width="1.3"/><path d="M10.5,9 H17 M10.5,11.5 H17 M10.5,14 H17 M10.5,16.3 H17" stroke="#33568e" stroke-width="1.1"/></g>
<g transform="translate(284.5 3)"><rect x="0.6" y="2" width="12" height="15" rx="1" fill="#d4d4d4" stroke="#c2c2c2"/><rect x="3.5" y="0.5" width="6" height="3.5" rx="1" fill="#e4e4e4" stroke="#c2c2c2"/><rect x="7.5" y="7.5" width="10.5" height="11.5" fill="#fff" stroke="#c6c6c6" stroke-width="1.2"/></g>
<g transform="translate(312 2.6)"><rect x="0.6" y="0.6" width="12" height="13.5" fill="#fff" stroke="#c8c8c8" stroke-width="1.2"/><rect x="8.5" y="6" width="12" height="13" fill="#fff" stroke="#c8c8c8" stroke-width="1.2"/><path d="M4,10 H13" stroke="#b8b8b8" stroke-width="2"/><path d="M12,6.5 L17,10 L12,13.5 Z" fill="#b8b8b8"/></g>
<g transform="translate(346 2.6)"><path d="M0,3.2 H13.5 V4.8 H0 Z M5,1.2 H8.5 V3 H5 Z" fill="#3d74b5"/><path d="M1,6 H12.5 L11.5,19 H2 Z" fill="#3d74b5"/><path d="M4.2,7.5 V17.5 M6.8,7.5 V17.5 M9.4,7.5 V17.5" stroke="#cfe0f3" stroke-width="1"/></g>
<g transform="translate(374 4)"><rect x="0.8" y="0.8" width="15.5" height="15.5" fill="none" stroke="#3d74b5" stroke-width="1.4" stroke-dasharray="3.2 1.6"/><rect x="4" y="4" width="8" height="7.5" fill="#9dbbe0" stroke="#3d74b5" stroke-width=".8"/><path d="M9,8.5 L17,11 L14.5,12.5 L18.5,16.5 L17,18 L13,14 L11.5,16.5 Z" fill="#3d74b5" stroke="#fff" stroke-width=".5"/></g>
<g transform="translate(403 2.6)"><rect x="3" y="2.5" width="14.5" height="15.5" fill="none" stroke="#3d74b5" stroke-width="1.4" stroke-dasharray="3.2 1.6"/><rect x="8.5" y="5" width="7" height="7.5" fill="#9dbbe0"/><path d="M0.5,0 L6,9" stroke="#b07a4a" stroke-width="1.6"/><path d="M5,8 L8,7 L14,18 L7.5,19.5 Z" fill="#e6c9a0" stroke="#c9a070" stroke-width=".7"/></g>
<g transform="translate(432.5 2.6)"><rect x="0.6" y="0.6" width="13.5" height="15" fill="#fff" stroke="#7a7a7a" stroke-width="1.2"/><path d="M3,4 H11.5 M3,6.5 H11.5 M3,9 H8 M3,11.5 H7" stroke="#999" stroke-width="1"/><circle cx="12.2" cy="13" r="3.3" fill="#fff" stroke="#3f9a2f" stroke-width="1.7"/><path d="M14.8,15.6 L19,19.8" stroke="#3f9a2f" stroke-width="2.2"/></g>
<path d="M461.5,11.3 H467.5 L464.5,14.8 Z" fill="#222"/>
<line x1="477.8" y1="2.5" x2="477.8" y2="18" stroke="#b5b5b5" stroke-width="1.2"/>
<text x="15" y="210" font-family="'Liberation Sans',sans-serif" font-size="27" fill="#3a8edc" textLength="150.5" lengthAdjust="spacing" style="font-weight:300" stroke="#fbfcff" stroke-width=".5">Model Builder</text>
<path d="M376,196.5 H386 L381,201.5 Z" fill="#444"/>
<path d="M396,193 H402 V199 H403.5 V200.5 H399.7 V205.5 H398.3 V200.5 H394.5 V199 H396 Z" fill="#444"/>
<path d="M13.5,229.8 L20.5,224.5 V228.3 H31.5 V231.3 H20.5 V235 Z" fill="#3a6fb4"/>
<path d="M61,229.8 L54,224.5 V228.3 H43.5 V231.3 H54 V235 Z" fill="#b9b9b9"/>
<path d="M83.5,221.5 L89,228.5 H85 V238.5 H82 V228.5 H78 Z" fill="#b9b9b9"/>
<path d="M113.3,238.5 L118.8,231.5 H114.8 V221.5 H111.8 V231.5 H107.8 Z" fill="#b9b9b9"/>
<line x1="133.5" y1="223.3" x2="150.5" y2="223.3" stroke="#2d5a94" stroke-width="2"/>
<path d="M135.5,230.3 Q142,224.6 148.5,230.3 Q142,236 135.5,230.3 Z" fill="#2d5a94"/>
<ellipse cx="142" cy="230.2" rx="3.3" ry="2.4" fill="#8fb0da"/><ellipse cx="142" cy="230.2" rx="2" ry="1.9" fill="#1d3f70"/>
<path d="M161,227.5 H170.5 L165.7,233 Z" fill="#222"/>
<line x1="185.5" y1="223.5" x2="197.5" y2="223.5" stroke="#2d5a94" stroke-width="2"/>
<line x1="187" y1="227" x2="197.5" y2="227" stroke="#c2c6ce" stroke-width="1.2"/>
<line x1="185.3" y1="227" x2="186.6" y2="227" stroke="#9aa6b8" stroke-width="1.2"/>
<line x1="187" y1="230" x2="197.5" y2="230" stroke="#c2c6ce" stroke-width="1.2"/>
<line x1="185.3" y1="230" x2="186.6" y2="230" stroke="#9aa6b8" stroke-width="1.2"/>
<line x1="187" y1="233" x2="197.5" y2="233" stroke="#c2c6ce" stroke-width="1.2"/>
<line x1="185.3" y1="233" x2="186.6" y2="233" stroke="#9aa6b8" stroke-width="1.2"/>
<line x1="187" y1="236" x2="197.5" y2="236" stroke="#c2c6ce" stroke-width="1.2"/>
<line x1="185.3" y1="236" x2="186.6" y2="236" stroke="#9aa6b8" stroke-width="1.2"/>
<line x1="202" y1="225" x2="202" y2="236.5" stroke="#2d5a94" stroke-width="1.7"/>
<path d="M198.3,228.3 L202,222.3 L205.7,228.3 Z" fill="#2d5a94"/>
<line x1="216.5" y1="223.5" x2="229" y2="223.5" stroke="#2d5a94" stroke-width="2"/>
<line x1="214.8" y1="223.5" x2="216" y2="223.5" stroke="#5c7fb2" stroke-width="2"/>
<line x1="216.5" y1="227" x2="229" y2="227" stroke="#3d6aaa" stroke-width="1.5"/>
<line x1="214.8" y1="227" x2="216" y2="227" stroke="#5c7fb2" stroke-width="1.5"/>
<line x1="216.5" y1="230" x2="229" y2="230" stroke="#3d6aaa" stroke-width="1.5"/>
<line x1="214.8" y1="230" x2="216" y2="230" stroke="#5c7fb2" stroke-width="1.5"/>
<line x1="216.5" y1="233" x2="229" y2="233" stroke="#3d6aaa" stroke-width="1.5"/>
<line x1="214.8" y1="233" x2="216" y2="233" stroke="#5c7fb2" stroke-width="1.5"/>
<line x1="216.5" y1="236.3" x2="229" y2="236.3" stroke="#2d5a94" stroke-width="2"/>
<line x1="214.8" y1="236.3" x2="216" y2="236.3" stroke="#5c7fb2" stroke-width="2"/>
<line x1="232.5" y1="223" x2="232.5" y2="234" stroke="#2d5a94" stroke-width="1.7"/>
<path d="M228.8,231.7 L232.5,237.7 L236.2,231.7 Z" fill="#2d5a94"/>
<line x1="247" y1="224" x2="257.5" y2="224" stroke="#b9b9b9" stroke-width="1.6"/>
<line x1="259" y1="224" x2="262" y2="224" stroke="#3d6aaa" stroke-width="1.6"/>
<line x1="247" y1="227" x2="257.5" y2="227" stroke="#b9b9b9" stroke-width="1.6"/>
<line x1="259" y1="227" x2="262" y2="227" stroke="#3d6aaa" stroke-width="1.6"/>
<line x1="247" y1="230" x2="257.5" y2="230" stroke="#b9b9b9" stroke-width="1.6"/>
<line x1="259" y1="230" x2="262" y2="230" stroke="#3d6aaa" stroke-width="1.6"/>
<line x1="247" y1="233" x2="257.5" y2="233" stroke="#b9b9b9" stroke-width="1.6"/>
<line x1="259" y1="233" x2="262" y2="233" stroke="#3d6aaa" stroke-width="1.6"/>
<line x1="247" y1="236" x2="257.5" y2="236" stroke="#b9b9b9" stroke-width="1.6"/>
<line x1="259" y1="236" x2="262" y2="236" stroke="#3d6aaa" stroke-width="1.6"/>
<path d="M273.5,227.5 H283 L278.2,233 Z" fill="#222"/>
<rect x="10.5" y="246.5" width="393" height="733" fill="#ffffff" stroke="#e3e3e3" stroke-width="1"/>
<rect x="382" y="247" width="21" height="711" fill="#f0f0f0"/>
<rect x="382" y="487" width="21" height="433" fill="#cdcdcd"/>
<path d="M388,261 L392.5,256.5 L397,261" fill="none" stroke="#8a8a8a" stroke-width="1.1"/>
<path d="M388,943 L392.5,947.5 L397,943" fill="none" stroke="#6a6a6a" stroke-width="1.1"/>
<rect x="11" y="958" width="392" height="21" fill="#f0f0f0"/>
<rect x="33" y="958" width="298" height="21" fill="#cdcdcd"/>
<path d="M24,964 L19.5,968.5 L24,973" fill="none" stroke="#6a6a6a" stroke-width="1.1"/>
<path d="M368,964 L372.5,968.5 L368,973" fill="none" stroke="#6a6a6a" stroke-width="1.1"/>
<rect x="382" y="958" width="21" height="21" fill="#f0f0f0"/>
<line x1="90" y1="247.3" x2="96" y2="247.3" stroke="#3d74b5" stroke-width="1.2"/>
<line x1="223" y1="247.3" x2="225" y2="247.3" stroke="#444" stroke-width="1"/>
<line x1="253" y1="247.3" x2="254.5" y2="247.3" stroke="#444" stroke-width="1"/>
<rect x="130" y="849" width="112.5" height="20.7" fill="#acd6f8"/>
<text x="132.5" y="269.5" font-family="'Liberation Sans',sans-serif" font-size="15" fill="#000" textLength="152.6" lengthAdjust="spacing">Linear Elastic Material 1</text>
<text x="132.5" y="290.8" font-family="'Liberation Sans',sans-serif" font-size="15" fill="#000" textLength="37.5" lengthAdjust="spacing">Free 1</text>
<text x="132.5" y="312.0" font-family="'Liberation Sans',sans-serif" font-size="15" fill="#000" textLength="91.5" lengthAdjust="spacing">Initial Values 1</text>
<text x="132.5" y="333.3" font-family="'Liberation Sans',sans-serif" font-size="15" fill="#000" textLength="150.5" lengthAdjust="spacing">Piezoelectric Material 1</text>
<path d="M94.5,322.41 L99.5,327.41 L94.5,332.41 Z" fill="#fff" stroke="#b4b4b4" stroke-width="1"/>
<text x="132.5" y="354.6" font-family="'Liberation Sans',sans-serif" font-size="15" fill="#000" textLength="116.5" lengthAdjust="spacing">Fixed Constraint 1</text>
<text x="132.5" y="375.9" font-family="'Liberation Sans',sans-serif" font-size="15" fill="#000" textLength="117.5" lengthAdjust="spacing">Fixed Constraint 2</text>
<text x="132.5" y="397.1" font-family="'Liberation Sans',sans-serif" font-size="15" fill="#000" textLength="110.5" lengthAdjust="spacing">Boundary Load 1</text>
<text x="108.5" y="418.4" font-family="'Liberation Sans',sans-serif" font-size="15" fill="#000" textLength="86.5" lengthAdjust="spacing">Electrostatics</text>
<path d="M70.8,407.49 L75.8,412.49 L70.8,417.49 Z" fill="#fff" stroke="#b4b4b4" stroke-width="1"/>
<text x="108.5" y="439.7" font-family="'Liberation Sans',sans-serif" font-size="15" fill="#000" textLength="83.5" lengthAdjust="spacing">Multiphysics</text>
<path d="M70.8,428.76 L75.8,433.76 L70.8,438.76 Z" fill="#fff" stroke="#b4b4b4" stroke-width="1"/>
<text x="108.5" y="460.9" font-family="'Liberation Sans',sans-serif" font-size="15" fill="#000" textLength="46.5" lengthAdjust="spacing">Mesh 1</text>
<path d="M75.0,450.83000000000004 V458.83000000000004 H67.0 Z" fill="#404040"/>
<text x="132.5" y="482.2" font-family="'Liberation Sans',sans-serif" font-size="15" fill="#000" textLength="25.5" lengthAdjust="spacing">Size</text>
<text x="132.5" y="503.5" font-family="'Liberation Sans',sans-serif" font-size="15" fill="#000" textLength="115.5" lengthAdjust="spacing">Free Tetrahedral 1</text>
<path d="M98.8,493.37000000000006 V501.37000000000006 H90.8 Z" fill="#404040"/>
<text x="156.5" y="524.7" font-family="'Liberation Sans',sans-serif" font-size="15" fill="#000" textLength="66.5" lengthAdjust="spacing">Warning 1</text>
<text x="156.5" y="546.0" font-family="'Liberation Sans',sans-serif" font-size="15" fill="#000" textLength="67.5" lengthAdjust="spacing">Warning 2</text>
<text x="156.5" y="567.3" font-family="'Liberation Sans',sans-serif" font-size="15" fill="#000" textLength="67.5" lengthAdjust="spacing">Warning 3</text>
<path d="M118.3,556.38 L123.3,561.38 L118.3,566.38 Z" fill="#fff" stroke="#b4b4b4" stroke-width="1"/>
<text x="85" y="588.6" font-family="'Liberation Sans',sans-serif" font-size="15" fill="#000" textLength="48.0" lengthAdjust="spacing">Study 1</text>
<path d="M51.2,578.45 V586.45 H43.2 Z" fill="#404040"/>
<text x="108.5" y="609.8" font-family="'Liberation Sans',sans-serif" font-size="15" fill="#000" textLength="172.5" lengthAdjust="spacing">Step 1: Frequency Domain</text>
<text x="108.5" y="631.1" font-family="'Liberation Sans',sans-serif" font-size="15" fill="#000" textLength="142.5" lengthAdjust="spacing">Solver Configurations</text>
<path d="M75.0,620.99 V628.99 H67.0 Z" fill="#404040"/>
<text x="132.5" y="652.4" font-family="'Liberation Sans',sans-serif" font-size="15" fill="#000" textLength="65.5" lengthAdjust="spacing">Solution 1</text>
<path d="M98.8,642.26 V650.26 H90.8 Z" fill="#404040"/>
<text x="156.5" y="673.6" font-family="'Liberation Sans',sans-serif" font-size="15" fill="#000" textLength="224.0" lengthAdjust="spacing">Compile Equations: Frequency Do</text>
<text x="156.5" y="694.9" font-family="'Liberation Sans',sans-serif" font-size="15" fill="#000" textLength="143.5" lengthAdjust="spacing">Dependent Variables 1</text>
<path d="M118.3,684.0 L123.3,689.0 L118.3,694.0 Z" fill="#fff" stroke="#b4b4b4" stroke-width="1"/>
<text x="156.5" y="716.2" font-family="'Liberation Sans',sans-serif" font-size="15" fill="#000" textLength="119.5" lengthAdjust="spacing">Stationary Solver 1</text>
<path d="M118.3,705.27 L123.3,710.27 L118.3,715.27 Z" fill="#fff" stroke="#b4b4b4" stroke-width="1"/>
<text x="85" y="737.4" font-family="'Liberation Sans',sans-serif" font-size="15" fill="#000" textLength="46.0" lengthAdjust="spacing">Results</text>
<path d="M51.2,727.3399999999999 V735.3399999999999 H43.2 Z" fill="#404040"/>
<text x="108.5" y="758.7" font-family="'Liberation Sans',sans-serif" font-size="15" fill="#000" textLength="59.5" lengthAdjust="spacing">Data Sets</text>
<path d="M70.8,747.81 L75.8,752.81 L70.8,757.81 Z" fill="#fff" stroke="#b4b4b4" stroke-width="1"/>
<text x="108.5" y="780.0" font-family="'Liberation Sans',sans-serif" font-size="15" fill="#000" textLength="94.5" lengthAdjust="spacing">Derived Values</text>
<text x="108.5" y="801.2" font-family="'Liberation Sans',sans-serif" font-size="15" fill="#000" textLength="41.5" lengthAdjust="spacing">Tables</text>
<path d="M70.8,790.35 L75.8,795.35 L70.8,800.35 Z" fill="#fff" stroke="#b4b4b4" stroke-width="1"/>
<text x="108.5" y="822.5" font-family="'Liberation Sans',sans-serif" font-size="15" fill="#000" textLength="82.5" lengthAdjust="spacing">Stress (solid)</text>
<path d="M75.0,812.42 V820.42 H67.0 Z" fill="#404040"/>
<text x="132.5" y="843.8" font-family="'Liberation Sans',sans-serif" font-size="15" fill="#000" textLength="59.5" lengthAdjust="spacing">Surface 1</text>
<path d="M98.8,833.6899999999999 V841.6899999999999 H90.8 Z" fill="#404040"/>
<text x="157" y="865.1" font-family="'Liberation Sans',sans-serif" font-size="15" fill="#000" textLength="82.2" lengthAdjust="spacing">Deformation</text>
<text x="109.3" y="886.3" font-family="'Liberation Sans',sans-serif" font-size="15" fill="#000" textLength="136.3" lengthAdjust="spacing">Electric Potential (es)</text>
<path d="M70.8,875.4300000000001 L75.8,880.4300000000001 L70.8,885.4300000000001 Z" fill="#fff" stroke="#b4b4b4" stroke-width="1"/>
<text x="109.3" y="907.6" font-family="'Liberation Sans',sans-serif" font-size="15" fill="#000" textLength="103.2" lengthAdjust="spacing">1D Plot Group 5</text>
<path d="M75.0,897.5 V905.5 H67.0 Z" fill="#404040"/>
<text x="133.6" y="928.9" font-family="'Liberation Sans',sans-serif" font-size="15" fill="#000" textLength="92.6" lengthAdjust="spacing">condanctance</text>
<text x="109.3" y="950.1" font-family="'Liberation Sans',sans-serif" font-size="15" fill="#000" textLength="40.4" lengthAdjust="spacing">Export</text>
<text x="198.5" y="418.4" font-family="'Liberation Sans',sans-serif" font-size="15" fill="#000" textLength="23.5" lengthAdjust="spacing" font-style="italic">(es)</text>
<text x="202" y="652.4" font-family="'Liberation Sans',sans-serif" font-size="15" fill="#000" textLength="35.0" lengthAdjust="spacing" font-style="italic">(sol1)</text>
<rect x="380" y="660" width="2" height="18" fill="#fff"/>
<g transform="translate(107.7 255.85000000000002)"><path d="M4,0.5 H17 Q19.8,0.5 19.8,4 V11.5 Q19.8,15 17,15 H4 Q0.6,15 0.6,11.5 V4 Q0.6,0.5 4,0.5 Z" fill="#1f5ba7"/><path d="M4,0.5 H17 Q19.8,0.5 19.8,4 V7 H3.5 Q2,3 4,0.5 Z" fill="#1f5ba7"/><path d="M3.5,7.2 H19.8" stroke="#fff" stroke-width="1.1"/><path d="M4,0.7 Q1.6,4 3.3,7.5 Q4.6,11 2.6,14.6" fill="none" stroke="#dfe6f0" stroke-width="1.2"/><rect x="-1" y="-1.5" width="6.5" height="7.5" fill="#fff"/><text x="-0.3" y="5.2" font-family="'Liberation Sans',sans-serif" font-size="7.5" font-weight="bold" fill="#222">D</text></g>
<g transform="translate(107.7 277.12)"><path d="M4,0.5 H17 Q19.8,0.5 19.8,4 V11.5 Q19.8,15 17,15 H4 Q0.6,15 0.6,11.5 V4 Q0.6,0.5 4,0.5 Z" fill="#1f5ba7"/><path d="M4,0.5 H17 Q19.8,0.5 19.8,4 V7 H3.5 Q2,3 4,0.5 Z" fill="#e4e4e4"/><path d="M3.5,7.2 H19.8" stroke="#fff" stroke-width="1.1"/><path d="M4,0.7 Q1.6,4 3.3,7.5 Q4.6,11 2.6,14.6" fill="none" stroke="#dfe6f0" stroke-width="1.2"/><rect x="-1" y="-1.5" width="6.5" height="7.5" fill="#fff"/><text x="-0.3" y="5.2" font-family="'Liberation Sans',sans-serif" font-size="7.5" font-weight="bold" fill="#222">D</text></g>
<g transform="translate(107.7 298.39000000000004)"><path d="M4,0.5 H17 Q19.8,0.5 19.8,4 V11.5 Q19.8,15 17,15 H4 Q0.6,15 0.6,11.5 V4 Q0.6,0.5 4,0.5 Z" fill="#1f5ba7"/><path d="M4,0.5 H17 Q19.8,0.5 19.8,4 V7 H3.5 Q2,3 4,0.5 Z" fill="#1f5ba7"/><path d="M3.5,7.2 H19.8" stroke="#fff" stroke-width="1.1"/><path d="M4,0.7 Q1.6,4 3.3,7.5 Q4.6,11 2.6,14.6" fill="none" stroke="#dfe6f0" stroke-width="1.2"/><rect x="-1" y="-1.5" width="6.5" height="7.5" fill="#fff"/><text x="-0.3" y="5.2" font-family="'Liberation Sans',sans-serif" font-size="7.5" font-weight="bold" fill="#222">D</text></g>
<g transform="translate(107.7 319.66)"><path d="M4,0.5 H17 Q19.8,0.5 19.8,4 V11.5 Q19.8,15 17,15 H4 Q0.6,15 0.6,11.5 V4 Q0.6,0.5 4,0.5 Z" fill="#1f5ba7"/><path d="M4,0.5 H17 Q19.8,0.5 19.8,4 V7 H3.5 Q2,3 4,0.5 Z" fill="#1f5ba7"/><path d="M3.5,7.2 H19.8" stroke="#fff" stroke-width="1.1"/><path d="M4,0.7 Q1.6,4 3.3,7.5 Q4.6,11 2.6,14.6" fill="none" stroke="#dfe6f0" stroke-width="1.2"/></g>
<g transform="translate(107.7 340.93)"><rect x="1.5" y="1.5" width="17.5" height="12.5" rx="3" fill="#e4e4e4"/><path d="M3.5,7.6 H18" stroke="#b5b5b5" stroke-width="1"/><rect x="1.5" y="1.5" width="17.5" height="12.5" rx="3" fill="none" stroke="#1f5ba7" stroke-width="1.6" stroke-dasharray="2.2 5.2"/></g>
<g transform="translate(107.7 362.20000000000005)"><path d="M4,0.5 H17 Q19.8,0.5 19.8,4 V11.5 Q19.8,15 17,15 H4 Q0.6,15 0.6,11.5 V4 Q0.6,0.5 4,0.5 Z" fill="#1f5ba7"/><path d="M4,0.5 H17 Q19.8,0.5 19.8,4 V7 H3.5 Q2,3 4,0.5 Z" fill="#e4e4e4"/><path d="M3.5,7.2 H19.8" stroke="#fff" stroke-width="1.1"/><path d="M4,0.7 Q1.6,4 3.3,7.5 Q4.6,11 2.6,14.6" fill="none" stroke="#dfe6f0" stroke-width="1.2"/></g>
<g transform="translate(107.7 383.47)"><path d="M4,0.5 H17 Q19.8,0.5 19.8,4 V11.5 Q19.8,15 17,15 H4 Q0.6,15 0.6,11.5 V4 Q0.6,0.5 4,0.5 Z" fill="#1f5ba7"/><path d="M4,0.5 H17 Q19.8,0.5 19.8,4 V7 H3.5 Q2,3 4,0.5 Z" fill="#e4e4e4"/><path d="M3.5,7.2 H19.8" stroke="#fff" stroke-width="1.1"/><path d="M4,0.7 Q1.6,4 3.3,7.5 Q4.6,11 2.6,14.6" fill="none" stroke="#dfe6f0" stroke-width="1.2"/></g>
<g transform="translate(85.4 403.4)"><path d="M0.5,0 L13,6.5 L15,9.2 L7.5,11.2 L17.8,18.6 L3,13.4 L1,10.8 L9,8.4 Z" fill="#3f7fc6"/><path d="M7.5,11.2 L17.8,18.6 L9.5,14" fill="none" stroke="#9fc0e6" stroke-width=".7"/></g>
<g transform="translate(83.7 424.5)"><circle cx="10" cy="5" r="3.8" fill="#d8dde6" stroke="#8a8f9a" stroke-width=".8"/><path d="M7.5,3 L12.5,7 M12.5,3 L7.5,7 M10,1.5 V8.5" stroke="#5a9a4a" stroke-width=".7"/><path d="M10,9 V12 M3,15 V12.5 H17.5 V15 M10,12 V15" fill="none" stroke="#9a9a9a" stroke-width="1"/><path d="M5.5,19.5 H14.5" stroke="#888" stroke-width="1"/><rect x="0.5" y="13.5" width="4" height="4" fill="#3f7fc6"/><rect x="5.8" y="13.5" width="3.6" height="5" rx="1.5" fill="#4caa3c"/><rect x="10.8" y="13.5" width="3.6" height="5" rx="1.5" fill="#e8762c"/><rect x="16" y="13.5" width="4" height="4" fill="#d0209a"/></g>
<g transform="translate(84 446.3)"><path d="M10.0,0.8 L19.4,15.700000000000001 H0.6 Z" fill="#dfe1e6" stroke="#6d7280" stroke-width="1.3"/><path d="M5.0,8.15 H15.0 L10.0,15.700000000000001 Z M10.0,0.8 V8.15" fill="none" stroke="#6d7280" stroke-width=".8"/><path d="M5.0,8.15 L5.6000000000000005,15.700000000000001 M15.0,8.15 L14.399999999999999,15.700000000000001" stroke="#6d7280" stroke-width=".6"/></g>
<g transform="translate(107.3 466.5)"><g transform="translate(1.5 4.5)"><path d="M5.5,0.8 L10.4,8.9 H0.6 Z" fill="#dfe1e6" stroke="#8a8a8a" stroke-width="1.3"/><path d="M2.75,4.75 H8.25 L5.5,8.9 Z M5.5,0.8 V4.75" fill="none" stroke="#8a8a8a" stroke-width=".8"/><path d="M2.75,4.75 L3.08,8.9 M8.25,4.75 L7.92,8.9" stroke="#8a8a8a" stroke-width=".6"/></g><path d="M0.5,17.3 H20 M18,0.5 V19" stroke="#1f5ba7" stroke-width="3" stroke-dasharray="1.9 0.9"/></g>
<g transform="translate(107.3 488.3)"><rect x="0.6" y="0.6" width="19" height="17.6" fill="#fff" stroke="#5aa84a" stroke-width="1.2"/><path d="M4,13 L8,4 L12,3 L9,14.5 Z" fill="#9aa4b8" stroke="#5d6c88" stroke-width=".9"/><path d="M6,8.5 L10.5,9.5 M8,4 L10.5,9.5" stroke="#fff" stroke-width=".7"/><path d="M13.8,8.5 L18.6,16.8 H9 Z" fill="#f0641e"/><path d="M13.8,11 V14" stroke="#fff" stroke-width="1.2"/><rect x="13.2" y="14.8" width="1.2" height="1.2" fill="#fff"/></g>
<g transform="translate(130.6 509.64)"><path d="M10.3,0.6 Q11,0 11.6,0.9 L20.3,15.6 Q20.8,16.8 19.6,16.9 H1.4 Q0.2,16.8 0.8,15.6 L9.4,0.9 Q9.8,0.3 10.3,0.6Z" fill="#f0591a"/><path d="M10.5,5 V11.3" stroke="#fff" stroke-width="2.2"/><rect x="9.4" y="12.8" width="2.2" height="2.2" fill="#fff"/></g>
<g transform="translate(130.6 530.91)"><path d="M10.3,0.6 Q11,0 11.6,0.9 L20.3,15.6 Q20.8,16.8 19.6,16.9 H1.4 Q0.2,16.8 0.8,15.6 L9.4,0.9 Q9.8,0.3 10.3,0.6Z" fill="#f0591a"/><path d="M10.5,5 V11.3" stroke="#fff" stroke-width="2.2"/><rect x="9.4" y="12.8" width="2.2" height="2.2" fill="#fff"/></g>
<g transform="translate(130.6 552.18)"><path d="M10.3,0.6 Q11,0 11.6,0.9 L20.3,15.6 Q20.8,16.8 19.6,16.9 H1.4 Q0.2,16.8 0.8,15.6 L9.4,0.9 Q9.8,0.3 10.3,0.6Z" fill="#f0591a"/><path d="M10.5,5 V11.3" stroke="#fff" stroke-width="2.2"/><rect x="9.4" y="12.8" width="2.2" height="2.2" fill="#fff"/></g>
<g transform="translate(60 577.5)"><path d="M0.5,4.5 C2,1 4.5,1 6,4.5 C7,7.5 9,8.5 10.5,7" fill="none" stroke="#2a9fb4" stroke-width="1.3"/><circle cx="12.3" cy="5.8" r="2.6" fill="none" stroke="#2a9fb4" stroke-width="1.2"/><circle cx="17.3" cy="5.2" r="2.6" fill="none" stroke="#2a7fc4" stroke-width="1.2"/><path d="M12,2 L16,0.8" stroke="#2a9fb4" stroke-width="1"/></g>
<g transform="translate(84.5 593.5)"><path d="M2,0.5 V18 H19" fill="none" stroke="#8a8a8a" stroke-width="1"/><path d="M0.5,3 L2,0.5 L3.5,3 M16.5,16.5 L19,18 L16.5,19.5" fill="none" stroke="#8a8a8a" stroke-width=".9"/><path d="M4,15 C6,15 6.5,3 8.5,3 C10.5,3 10.5,15 12.5,15 C14.5,15 15,3 17,3" fill="none" stroke="#2a9fb4" stroke-width="1.2"/><path d="M4,3 C6,3 6.5,15 8.5,15 C10.5,15 10.5,3 12.5,3 C14.5,3 15,15 17,15" fill="none" stroke="#3a6fb4" stroke-width="1.1"/></g>
<g transform="translate(83.8 616)"><path d="M1.5,1 V19 M7,5.5 V19 M12,10 V19 M16.5,14 V19" stroke="#a6a6a6" stroke-width="1"/><rect x="0.5" y="0.5" width="4.5" height="3.6" fill="#3f74b8"/><rect x="5.5" y="4.6" width="4.5" height="3.6" fill="#3f74b8"/><rect x="10.5" y="8.7" width="4.5" height="3.6" fill="#3f74b8"/><rect x="15.2" y="12.5" width="4.8" height="3.6" fill="#3f74b8"/></g>
<g transform="translate(107.6 636.2)"><rect x="0.6" y="0.6" width="19" height="18.6" fill="#fff" stroke="#5aa84a" stroke-width="1.2"/><path d="M4,5 V17 M9,9 V17" stroke="#b5b5b5" stroke-width="1"/><rect x="2.5" y="4" width="4.3" height="3.3" fill="#a8a8a8"/><rect x="7" y="8" width="4.3" height="3.3" fill="#a8a8a8"/><rect x="12.5" y="12.2" width="5" height="3.6" fill="#3f74b8"/><path d="M15.5,2.5 V8.5 M13.3,6.3 L15.5,9 L17.7,6.3" fill="none" stroke="#3f74b8" stroke-width="1.2"/></g>
<g transform="translate(131 658.5)"><text x="0" y="6.5" font-family="'DejaVu Sans',sans-serif" font-size="8.5" font-weight="bold" fill="#3f6fb8">∂u</text><text x="0" y="15" font-family="'DejaVu Sans',sans-serif" font-size="8.5" font-weight="bold" fill="#3f6fb8">∂t</text><path d="M0,8 H11" stroke="#3f6fb8" stroke-width=".9"/><path d="M12.2,6.5 H14.5 M12.2,9 H14.5" stroke="#3f6fb8" stroke-width=".9"/><text x="15.5" y="9" font-family="'DejaVu Sans',sans-serif" font-size="9" font-weight="bold" fill="#3f6fb8">f</text><circle cx="16" cy="15.5" r="3" fill="none" stroke="#6a6a6a" stroke-width="2.2" stroke-dasharray="1.5 .85"/><circle cx="16" cy="15.5" r="2.2" fill="none" stroke="#6a6a6a" stroke-width="1.3"/></g>
<text x="131" y="692.3" font-family="'Liberation Sans',sans-serif" font-size="10.5" font-weight="bold" fill="#3f6fb8" textLength="20.5" lengthAdjust="spacingAndGlyphs">u,v,w</text>
<g transform="translate(131.7 700.3)"><path d="M2,0.5 V18 H12" fill="none" stroke="#8a8a8a" stroke-width="1"/><path d="M0.5,3 L2,0.5 L3.5,3" fill="none" stroke="#8a8a8a" stroke-width=".9"/><path d="M5,4.5 H19.5" stroke="#8a8a8a" stroke-width="1"/><path d="M4,15.5 C6,9 12,7 19,7" fill="none" stroke="#2a8fb8" stroke-width="1.5"/><circle cx="16" cy="15" r="3" fill="none" stroke="#6a6a6a" stroke-width="2.2" stroke-dasharray="1.5 .85"/><circle cx="16" cy="15" r="2.2" fill="none" stroke="#6a6a6a" stroke-width="1.3"/></g>
<g transform="translate(60 721.4)"><path d="M3,0.8 H14 V3 M1,13.5 L3.5,11.5 M1,13.5 V15.5 H6" fill="none" stroke="#7d7d7d" stroke-width="1"/><rect x="3" y="0.8" width="11" height="11" fill="#e6e6e6" stroke="#7d7d7d"/><rect x="5.5" y="3" width="11.5" height="11.5" fill="#f2f2f2" stroke="#7d7d7d"/><rect x="8" y="5.2" width="11.3" height="11.3" fill="#fff" stroke="#7d7d7d"/><rect x="10" y="7" width="7.4" height="7.4" fill="#b3246f"/><path d="M1,15.5 L6.5,18 H19.5 V16.5" fill="#e0e0e0" stroke="#7d7d7d" stroke-width=".9"/></g>
<g transform="translate(86 744)"><rect x="0.0" y="0.0" width="2.2" height="2" fill="#d978a8"/><rect x="0.0" y="3.3" width="2.2" height="2" fill="#b3246f"/><rect x="0.0" y="6.6" width="2.2" height="2" fill="#b3246f"/><rect x="0.0" y="9.899999999999999" width="2.2" height="2" fill="#d978a8"/><rect x="0.0" y="13.2" width="2.2" height="2" fill="#b3246f"/><rect x="3.7" y="0.0" width="2.2" height="2" fill="#b3246f"/><rect x="3.7" y="3.3" width="2.2" height="2" fill="#b3246f"/><rect x="3.7" y="6.6" width="2.2" height="2" fill="#d978a8"/><rect x="3.7" y="9.899999999999999" width="2.2" height="2" fill="#b3246f"/><rect x="3.7" y="13.2" width="2.2" height="2" fill="#b3246f"/><rect x="7.4" y="0.0" width="2.2" height="2" fill="#b3246f"/><rect x="7.4" y="3.3" width="2.2" height="2" fill="#d978a8"/><rect x="7.4" y="6.6" width="2.2" height="2" fill="#b3246f"/><rect x="7.4" y="9.899999999999999" width="2.2" height="2" fill="#b3246f"/><rect x="7.4" y="13.2" width="2.2" height="2" fill="#d978a8"/><rect x="11.100000000000001" y="0.0" width="2.2" height="2" fill="#d978a8"/><rect x="11.100000000000001" y="3.3" width="2.2" height="2" fill="#b3246f"/><rect x="11.100000000000001" y="6.6" width="2.2" height="2" fill="#b3246f"/><rect x="11.100000000000001" y="9.899999999999999" width="2.2" height="2" fill="#d978a8"/><rect x="11.100000000000001" y="13.2" width="2.2" height="2" fill="#b3246f"/></g>
<text x="84" y="772.5" font-family="'Liberation Mono',monospace" font-size="8.5" font-weight="bold" fill="#b3246f" textLength="19" lengthAdjust="spacingAndGlyphs">8.85</text>
<text x="84" y="779" font-family="'Liberation Mono',monospace" font-size="7.5" font-weight="bold" fill="#b3246f" textLength="19" lengthAdjust="spacingAndGlyphs">e-12</text>
<g transform="translate(85.6 786.7)"><rect x="0" y="0" width="15.5" height="15.5" fill="#b3246f"/><path d="M5.2,0 V15.5 M10.3,0 V15.5 M0,5.2 H15.5 M0,10.3 H15.5" stroke="#f3c3dc" stroke-width="1.1"/><rect x="5.8" y="5.8" width="4" height="4" fill="#e79cc3"/><rect x="10.9" y="5.8" width="4" height="4" fill="#e79cc3"/><rect x="5.8" y="10.9" width="4" height="4" fill="#e79cc3"/><rect x="10.9" y="10.9" width="4" height="4" fill="#e79cc3"/></g>
<g transform="translate(84.8 808)"><path d="M0,0 H13.5 L18.8,5.5 V16.6 H5.3 L0,11.5 Z" fill="#b3246f"/><path d="M0.2,0.2 L5.3,5.5 H18.8 M5.3,5.5 V16.6" fill="none" stroke="#f0a6cc" stroke-width=".9"/></g>
<g transform="translate(107.6 827.5)"><path d="M0.5,0.5 H14.5 L19.5,6 V17.5 H5.5 L0.5,12 Z M5.5,6 V17.5" fill="none" stroke="#8d8d8d" stroke-width="1"/><path d="M14.5,0.5 V12 L19.5,17.5 M0.5,12 H14.5" fill="none" stroke="#c4c4c4" stroke-width=".9"/><path d="M0.5,0.5 H14.5 L19.5,6 H5.5 Z" fill="#b3246f" stroke="#8c1a55" stroke-width=".6"/></g>
<g transform="translate(131 852)"><path d="M1,1.2 H19.5 L18,4.2 H1 Z" fill="#d6e4f2" stroke="#9aa9bd" stroke-width=".8"/><path d="M0.8,1 C9,1 15,3 20,10.5 L17.5,13 C13.5,7.5 8,4.6 0.8,4.6 Z" fill="#f3d6e6" stroke="#b3246f" stroke-width="1.4"/></g>
<g transform="translate(84.8 871)"><path d="M0,2 H13.5 L18.8,7 V17.3 H5.3 L0,12.5 Z" fill="#b3246f"/><path d="M0.2,2.2 L5.3,7 H18.8 M5.3,7 V17.3" fill="none" stroke="#f0a6cc" stroke-width=".9"/><rect x="8.5" y="-0.5" width="11" height="9" fill="#fff"/><path d="M14.3,0 V8.5 M10,4.2 H18.6 M11.3,1.2 L17.3,7.2 M17.3,1.2 L11.3,7.2" stroke="#444" stroke-width="1.3"/><circle cx="14.3" cy="4.2" r="2.4" fill="#444"/></g>
<g transform="translate(84.5 896)"><path d="M0.7,6.5 C2.5,0 6,0 9,4.7 C12,9.5 15.5,9.5 17.8,3.2" fill="none" stroke="#b3246f" stroke-width="1.6"/></g>
<g transform="translate(110 914.3)"><path d="M2,0.5 V16 H17" fill="none" stroke="#8a8a8a" stroke-width="1"/><path d="M0.5,3 L2,0.5 L3.5,3" fill="none" stroke="#8a8a8a" stroke-width=".9"/><path d="M4,10 C6,5 8,5 10,9 C12,12.5 14,10 16.5,6" fill="none" stroke="#b3246f" stroke-width="1.3"/><circle cx="15" cy="2" r="1.3" fill="#b3246f"/><circle cx="5" cy="6" r="1.1" fill="#b3246f"/></g>
<g transform="translate(83.7 934.5)"><path d="M0.7,4 L4.5,0.7 H17 L19.5,6 V16 H6 L0.7,12 Z" fill="#fbe9f2" stroke="#b3246f" stroke-width="1.2"/><path d="M0.7,4 L6,7.5 H19.5 M6,7.5 V16 M4.5,0.7 L8.5,4.5 M17,0.7 L14,4.5 M8.5,4.5 H14" fill="none" stroke="#b3246f" stroke-width="1"/><rect x="8.5" y="9.3" width="8.5" height="4.8" fill="none" stroke="#b3246f" stroke-width="1"/><path d="M10,13 L12,11 L13.5,12.3 L15.5,10.5" fill="none" stroke="#b3246f" stroke-width=".8"/></g>
<text x="426.8" y="210" font-family="'Liberation Sans',sans-serif" font-size="27" fill="#4a73aa" textLength="84.0" lengthAdjust="spacing" style="font-weight:300" stroke="#fbfcff" stroke-width=".5">Settings</text>
<text x="425.3" y="239.7" font-family="'Liberation Sans',sans-serif" font-size="19.5" fill="#4a73aa" textLength="95.3" lengthAdjust="spacing" stroke="#fbfcff" stroke-width=".3">Deformation</text>
<path d="M795,196.5 H805 L800,201.5 Z" fill="#cfd3dc"/>
<path d="M815,193 H821 V199 H822.5 V200.5 H818.7 V205.5 H817.3 V200.5 H813.5 V199 H815 Z" fill="#cfd3dc"/>
<g transform="translate(425.2 250.5)"><rect x="0.5" y="0.5" width="18.5" height="14.5" fill="#fff" stroke="#8a8a8a"/><rect x="1" y="1" width="17.5" height="2" fill="#e2e2e2"/><rect x="8" y="4.5" width="10" height="9" fill="#b3246f"/><circle cx="6.6" cy="9" r="4.4" fill="#b3246f" stroke="#fff" stroke-width=".9"/><path d="M4,8.3 H6.6 V6.6 L9.3,9 L6.6,11.4 V9.7 H4 Z" fill="#fff"/></g>
<text x="450.2" y="262" font-family="'Liberation Sans',sans-serif" font-size="15" fill="#000" textLength="25.8" lengthAdjust="spacing">Plot</text>
<text x="424.5" y="304.8" font-family="'Liberation Sans',sans-serif" font-size="15" fill="#000" textLength="37.4" lengthAdjust="spacing">Label:</text>
<rect x="474.5" y="287.5" width="311" height="23" fill="#fff" stroke="#d4d4d8" stroke-width="1"/>
<text x="479.3" y="303.8" font-family="'Liberation Sans',sans-serif" font-size="15" fill="#000" textLength="82.7" lengthAdjust="spacing">Deformation</text>
<rect x="795.5" y="285.5" width="25.5" height="27.5" fill="url(#btn)" stroke="#a9a9a9" stroke-width="1" rx="2.5"/>
<g transform="translate(800 291)"><rect x="2.5" y="0.5" width="14" height="13" fill="#fff" stroke="#777"/><rect x="3" y="1" width="13" height="2.6" fill="#bdbdbd"/><path d="M6.5,6.7 H14.5 M6.5,9.5 H14.5" stroke="#4d9a3d" stroke-width="1.3"/><path d="M0.5,15 L5,10.5 M2,10.3 H5.2 V13.5" fill="none" stroke="#3f8a30" stroke-width="1.4"/></g>
<rect x="417" y="325.5" width="411" height="34.5" fill="#dce6f4"/>
<path d="M424.5,340.3 H434.7 L429.6,346.3 Z" fill="#3c3c3c"/>
<text x="454" y="347.7" font-family="'Liberation Sans',sans-serif" font-size="16" fill="#000" textLength="78.3" lengthAdjust="spacing">Expression</text>
<path d="M729.3,334.3 H732.3 V339.5 H737.8 V342.5 H732.3 V347.8 H729.3 V342.5 H723.8 V339.5 H729.3 Z" fill="#2f6fc2"/>
<path d="M748.5,339 H758 L753.2,344.5 Z" fill="#222"/>
<path d="M777.5,333.2 L788.5,338.6 L777.5,343.6 Z" fill="#3f9a2f"/>
<path d="M789,341.5 L779.5,345.3 L789,349 Z" fill="#d81e5a"/>
<path d="M800.7,339 H810.2 L805.4,344.5 Z" fill="#222"/>
<text x="424" y="386.4" font-family="'Liberation Sans',sans-serif" font-size="15" fill="#000" textLength="90.4" lengthAdjust="spacing">x component:</text>
<rect x="423.5" y="398.5" width="358" height="22" fill="#fff" stroke="#cfcfd4" stroke-width="1"/>
<text x="428" y="413.8" font-family="'Liberation Sans',sans-serif" font-size="15" fill="#000">u</text>
<text x="794" y="414.8" font-family="'Liberation Sans',sans-serif" font-size="16" fill="#000" textLength="26.8" lengthAdjust="spacing">mm</text>
<text x="424" y="443.8" font-family="'Liberation Sans',sans-serif" font-size="15" fill="#000" textLength="91.5" lengthAdjust="spacing">y component:</text>
<rect x="423.5" y="455.5" width="358" height="22" fill="#fff" stroke="#cfcfd4" stroke-width="1"/>
<text x="428" y="471" font-family="'Liberation Sans',sans-serif" font-size="15" fill="#000">v</text>
<text x="794" y="471.8" font-family="'Liberation Sans',sans-serif" font-size="16" fill="#000" textLength="26.8" lengthAdjust="spacing">mm</text>
<text x="424" y="501.3" font-family="'Liberation Sans',sans-serif" font-size="15" fill="#000" textLength="90.4" lengthAdjust="spacing">z component:</text>
<rect x="423.5" y="513.5" width="358" height="22" fill="#fff" stroke="#cfcfd4" stroke-width="1"/>
<text x="428" y="528.6" font-family="'Liberation Sans',sans-serif" font-size="15" fill="#000">w</text>
<text x="794" y="529.4" font-family="'Liberation Sans',sans-serif" font-size="16" fill="#000" textLength="26.8" lengthAdjust="spacing">mm</text>
<text x="424" y="561.2" font-family="'Liberation Sans',sans-serif" font-size="15" fill="#000" textLength="77.6" lengthAdjust="spacing">Description:</text>
<rect x="516.5" y="548.5" width="17" height="15" fill="#fff" stroke="#4d4d4d" stroke-width="1"/>
<rect x="552.5" y="544.5" width="268" height="22" fill="#fcfdff" stroke="#e4e6ec" stroke-width="1"/>
<text x="556.4" y="559.6" font-family="'Liberation Sans',sans-serif" font-size="15" fill="#a2a2a2" textLength="263.5" lengthAdjust="spacing">Displacement field (material and geome</text>
<rect x="417" y="581.3" width="411" height="30.700000000000045" fill="#dce6f4"/>
<path d="M426.3,591.8 L431.8,597.3 L426.3,602.8 Z" fill="#f4f7fb" stroke="#a9adb6" stroke-width="1"/>
<text x="454.5" y="603" font-family="'Liberation Sans',sans-serif" font-size="16" fill="#000" textLength="28.0" lengthAdjust="spacing">Title</text>
<rect x="417" y="615.6" width="411" height="29.799999999999955" fill="#dce6f4"/>
<path d="M424.3,627.7 H434.5 L429.40000000000003,633.7 Z" fill="#3c3c3c"/>
<text x="454.5" y="635.8" font-family="'Liberation Sans',sans-serif" font-size="16" fill="#000" textLength="36.2" lengthAdjust="spacing">Scale</text>
<text x="424.3" y="674.3" font-family="'Liberation Sans',sans-serif" font-size="15" fill="#000" textLength="78.7" lengthAdjust="spacing">Scale factor:</text>
<rect x="517.5" y="661.5" width="17" height="16" fill="#fff" stroke="#4d4d4d" stroke-width="1"/>
<path d="M520.3,669.2 L524.3,673.6 L531.8,664.6" fill="none" stroke="#222" stroke-width="1.9"/>
<rect x="554.5" y="658.5" width="266" height="22" fill="#fff" stroke="#d4d4d8" stroke-width="1"/>
<text x="558.5" y="673.5" font-family="'Liberation Sans',sans-serif" font-size="15" fill="#000">1</text>
<rect x="417" y="695.4" width="411" height="30.600000000000023" fill="#dce6f4"/>
<path d="M426.3,705.3 L431.8,710.8 L426.3,716.3 Z" fill="#f4f7fb" stroke="#a9adb6" stroke-width="1"/>
<text x="454.5" y="715.5" font-family="'Liberation Sans',sans-serif" font-size="16" fill="#000" textLength="70.0" lengthAdjust="spacing">Advanced</text>
<text x="845.3" y="210" font-family="'Liberation Sans',sans-serif" font-size="27" fill="#4a73aa" textLength="92.7" lengthAdjust="spacing" style="font-weight:300" stroke="#fbfcff" stroke-width=".5">Graphics</text>
<path d="M1882.5,196.5 H1892.5 L1887.5,201.5 Z" fill="#cfd3dc"/>
<path d="M1902.5,193 H1908.5 V199 H1910 V200.5 H1906.2 V205.5 H1904.8 V200.5 H1901 V199 H1902.5 Z" fill="#cfd3dc"/>
<g transform="translate(845 221.5)"><circle cx="6.3" cy="6.3" r="5.2" fill="#fff" stroke="#34507a" stroke-width="1.7"/><path d="M10.2,10.2 L15.5,15.2" stroke="#34507a" stroke-width="2.6" stroke-linecap="round"/><path d="M3.6,6.3 H9 M6.3,3.6 V9" stroke="#34507a" stroke-width="1.4"/></g>
<g transform="translate(875 221.5)"><circle cx="6.3" cy="6.3" r="5.2" fill="#fff" stroke="#34507a" stroke-width="1.7"/><path d="M10.2,10.2 L15.5,15.2" stroke="#34507a" stroke-width="2.6" stroke-linecap="round"/><path d="M3.6,6.3 H9" stroke="#34507a" stroke-width="1.4"/></g>
<g transform="translate(903.5 221.5)"><rect x="0.8" y="6" width="9.5" height="9.5" fill="none" stroke="#34507a" stroke-width="1.3" stroke-dasharray="2 1.4"/><g transform="translate(4.5 0)"><circle cx="6.3" cy="6.3" r="5.2" fill="#fff" stroke="#34507a" stroke-width="1.7"/><path d="M10.2,10.2 L15.5,15.2" stroke="#34507a" stroke-width="2.6" stroke-linecap="round"/><path d="M3.6,6.3 H9 M6.3,3.6 V9" stroke="#34507a" stroke-width="1.3"/></g></g>
<g transform="translate(934 220.3)"><rect x="0.6" y="0.6" width="17.2" height="17.2" fill="#fff" stroke="#777" stroke-width="1.1"/><path d="M9.2,5.5 V12.9 M5.5,9.2 H12.9" stroke="#555" stroke-width="1.1"/><path d="M9.2,1.6 L11.5,4.6 H6.9 Z M9.2,16.8 L11.5,13.8 H6.9 Z M1.6,9.2 L4.6,6.9 V11.5 Z M16.8,9.2 L13.8,6.9 V11.5 Z" fill="#4a8ad4"/></g>
<line x1="967.2" y1="221" x2="967.2" y2="240" stroke="#d0d3da" stroke-width="1.2"/>
<g transform="translate(983 222)"><path d="M10,1.5 V12.5" stroke="#4a7fc8" stroke-width="1.3"/><path d="M8,4 L10,0.8 L12,4" fill="none" stroke="#4a7fc8" stroke-width="1.1"/><path d="M10,12.5 L2,6.5" stroke="#4aa63a" stroke-width="1.3"/><path d="M1.5,9.5 L1.2,5.8 L4.8,5.8" fill="none" stroke="#4aa63a" stroke-width="1.1"/><path d="M10,12.5 L20,7" stroke="#e0245e" stroke-width="1.4"/><path d="M17,6 L20.6,6.6 L19,10" fill="none" stroke="#e0245e" stroke-width="1.1"/></g>
<path d="M1013.5,228 H1022.7 L1018.1,233.2 Z" fill="#222"/>
<g transform="translate(1038.7 220.5)"><path d="M2,1 V16.5" stroke="#4aa63a" stroke-width="1.2"/><path d="M0.3,3.5 L2,0.6 L3.7,3.5" fill="none" stroke="#4aa63a" stroke-width="1"/><path d="M2,16.5 H17" stroke="#e0245e" stroke-width="1.2"/><path d="M14.8,14.8 L17.8,16.5 L14.8,18.2" fill="#e0245e" stroke="#e0245e" stroke-width=".6"/><text x="4.6" y="11.3" font-family="'Liberation Sans',sans-serif" font-size="11.5" fill="#6a7fa0" textLength="12.5" lengthAdjust="spacingAndGlyphs">xy</text></g>
<g transform="translate(1068.7 220.5)"><path d="M2,1 V16.5" stroke="#4a7fc8" stroke-width="1.2"/><path d="M0.3,3.5 L2,0.6 L3.7,3.5" fill="none" stroke="#4a7fc8" stroke-width="1"/><path d="M2,16.5 H17" stroke="#4aa63a" stroke-width="1.2"/><path d="M14.8,14.8 L17.8,16.5 L14.8,18.2" fill="#4aa63a" stroke="#4aa63a" stroke-width=".6"/><text x="4.6" y="11.3" font-family="'Liberation Sans',sans-serif" font-size="11.5" fill="#6a7fa0" textLength="12.5" lengthAdjust="spacingAndGlyphs">yz</text></g>
<g transform="translate(1098.6 220.5)"><path d="M2,1 V16.5" stroke="#e0245e" stroke-width="1.2"/><path d="M0.3,3.5 L2,0.6 L3.7,3.5" fill="none" stroke="#e0245e" stroke-width="1"/><path d="M2,16.5 H17" stroke="#4a7fc8" stroke-width="1.2"/><path d="M14.8,14.8 L17.8,16.5 L14.8,18.2" fill="#4a7fc8" stroke="#4a7fc8" stroke-width=".6"/><text x="4.6" y="11.3" font-family="'Liberation Sans',sans-serif" font-size="11.5" fill="#6a7fa0" textLength="12.5" lengthAdjust="spacingAndGlyphs">zx</text></g>
<rect x="1126.7" y="219.7" width="21.6" height="20.6" fill="url(#tg)" stroke="#4f6ea4" stroke-width="1.4" rx="3"/>
<rect x="1156.9" y="219.7" width="21.6" height="20.6" fill="url(#tg)" stroke="#4f6ea4" stroke-width="1.4" rx="3"/>
<rect x="1187.0" y="219.7" width="21.6" height="20.6" fill="url(#tg)" stroke="#4f6ea4" stroke-width="1.4" rx="3"/>
<rect x="1237.2" y="219.7" width="21.6" height="20.6" fill="url(#tg)" stroke="#4f6ea4" stroke-width="1.4" rx="3"/>
<g transform="translate(1126 219)"><rect x="5" y="5" width="12.6" height="11.6" fill="#fff" stroke="#3f6fc0" stroke-width="1"/><rect x="5.5" y="5.5" width="11.6" height="10.6" fill="#4a86d8"/><path d="M9.2,5 V16.6 M13.4,5 V16.6 M5,8.8 H17.6 M5,12.7 H17.6" stroke="#fff" stroke-width="1.1"/></g>
<g transform="translate(1156.2 219)"><g transform="translate(3.5 5.5) scale(.74)"><path d="M10,1.5 V12.5" stroke="#4a7fc8" stroke-width="1.3"/><path d="M8,4 L10,0.8 L12,4" fill="none" stroke="#4a7fc8" stroke-width="1.1"/><path d="M10,12.5 L2,6.5" stroke="#4aa63a" stroke-width="1.3"/><path d="M1.5,9.5 L1.2,5.8 L4.8,5.8" fill="none" stroke="#4aa63a" stroke-width="1.1"/><path d="M10,12.5 L20,7" stroke="#e0245e" stroke-width="1.4"/><path d="M17,6 L20.6,6.6 L19,10" fill="none" stroke="#e0245e" stroke-width="1.1"/></g></g>
<g transform="translate(1186.3 219)"><rect x="13.2" y="4.5" width="3.4" height="4" fill="#d8342c"/><rect x="13.2" y="8.5" width="3.4" height="4" fill="#f07a28"/><rect x="13.2" y="12.5" width="3.4" height="4" fill="#f2b63a"/></g>
<line x1="1220.7" y1="221" x2="1220.7" y2="240" stroke="#d0d3da" stroke-width="1.2"/>
<g transform="translate(1236.5 219)"><path d="M5,10.5 L13.5,5.2 V15.8 Z" fill="#3e72bb"/><path d="M13.5,7 Q17,10.5 13.5,14 M13.5,5.2 L19.5,3 M13.5,15.8 L20,20.5" fill="none" stroke="#5d7fb2" stroke-width="1"/></g>
<g transform="translate(1268.3 221.6)"><rect x="0.6" y="0.6" width="13.5" height="11" rx="1.5" fill="#e4ecf7" stroke="#8faad4" stroke-width="1.1"/><rect x="4" y="4.5" width="13.5" height="11" rx="1.5" fill="#dadde2" stroke="#8faad4" stroke-width="1.1"/></g>
<line x1="1300.5" y1="221" x2="1300.5" y2="240" stroke="#d0d3da" stroke-width="1.2"/>
<g transform="translate(1317 222.5)"><path d="M0,3 H4 L5.5,0.5 H11 L12.5,3 H21 V15 H0 Z" fill="#3e72bb"/><rect x="1.8" y="4.3" width="3" height="1.6" fill="#fff"/><circle cx="11" cy="9" r="4.6" fill="#fff"/><circle cx="11" cy="9" r="2.9" fill="#3e72bb"/></g>
<g transform="translate(1348.7 220)"><path d="M3.5,7 V0.8 H14.5 V7" fill="#fff" stroke="#3e72bb" stroke-width="1.5"/><rect x="0" y="6.5" width="18" height="9.5" rx="1.2" fill="#3e72bb"/><path d="M3.5,12.5 H14.5 V19.2 H3.5 Z" fill="#fff" stroke="#3e72bb" stroke-width="1.5"/><rect x="12.5" y="8.5" width="1.3" height="1.3" fill="#fff"/><rect x="15" y="8.5" width="1.3" height="1.3" fill="#fff"/></g>
<rect x="841" y="945" width="84" height="29.5" fill="#e9e9e9"/>
<text x="846.4" y="966.3" font-family="'Liberation Sans',sans-serif" font-size="15.6" fill="#1a1a1a" textLength="73.4" lengthAdjust="spacing">Messages</text>
<rect x="935" y="945" width="75" height="29.5" fill="#e9e9e9"/>
<text x="940" y="966.3" font-family="'Liberation Sans',sans-serif" font-size="15.6" fill="#1a1a1a" textLength="64.4" lengthAdjust="spacing">Progress</text>
<rect x="1020" y="945" width="37" height="29.5" fill="#e9e9e9"/>
<text x="1025.2" y="966.3" font-family="'Liberation Sans',sans-serif" font-size="15.6" fill="#1a1a1a" textLength="27.1" lengthAdjust="spacing">Log</text>
<line x1="836" y1="974.5" x2="1915" y2="974.5" stroke="#d4d6dc" stroke-width="1"/>
<path d="M1067.5,975 V945.5 H1178.5 V975" fill="#fbfcff" stroke="#d0d3da" stroke-width="1"/>
<text x="1074" y="966.3" font-family="'Liberation Sans',sans-serif" font-size="15.6" fill="#3b66a8" textLength="97.8" lengthAdjust="spacing">Evaluation 3D</text>
<path d="M1864,958.5 H1873 L1868.5,963 Z" fill="#cfd3dc"/>
<path d="M1884,955.5 H1889 V960.5 H1890.5 V962 H1887.2 V966.5 H1885.8 V962 H1882.5 V960.5 H1884 Z" fill="#cfd3dc"/>
<path d="M1900.5,956 L1910.5,966 M1910.5,956 L1900.5,966" fill="none" stroke="#cfd3dc" stroke-width="1.3"/>
<line x1="849" y1="984.3" x2="867" y2="984.3" stroke="#4a78b8" stroke-width="1.6"/>
<line x1="927" y1="984" x2="950" y2="984" stroke="#3b63a8" stroke-width="2.2"/>
<line x1="1160" y1="984.3" x2="1179" y2="984.3" stroke="#b3246f" stroke-width="1.6"/>
<line x1="1188" y1="984.3" x2="1203" y2="984.3" stroke="#8a8a8a" stroke-width="1.4"/>
<line x1="884" y1="984.5" x2="886.5" y2="984.5" stroke="#aab" stroke-width="1"/>
<line x1="1050" y1="984.5" x2="1052.5" y2="984.5" stroke="#aab" stroke-width="1"/>
<line x1="1070" y1="984.5" x2="1072.5" y2="984.5" stroke="#aab" stroke-width="1"/>
<line x1="1108" y1="984.5" x2="1110.5" y2="984.5" stroke="#aab" stroke-width="1"/>
<text x="1030" y="1021" font-family="'Liberation Sans',sans-serif" font-size="15" fill="#000" textLength="108.0" lengthAdjust="spacing">1.58 GB | 1.76 GB</text>
<text x="1790" y="1048.5" font-family="'Liberation Sans',sans-serif" font-size="14" fill="#e8e8e8" textLength="33">14:05</text>
<rect x="836" y="247" width="1079" height="683.5" fill="url(#cv)"/>
<path d="M1035,369 L1739.5,544 L1711,640 L1675,765 L1639.5,882 L944.5,718 Z" fill="url(#fr)"/>
<path d="M1021,303.7 L1180,341.2 L1270,365 L1480,418.6 L1676,466 L1739.5,544 L1035,369 Z" fill="url(#tp)"/>
<path d="M1021,303.7 L1035,369 L944.5,718 L936,628 Z" fill="url(#lf)"/>
<g clip-path="url(#cfr)"><ellipse cx="1287" cy="512" rx="110" ry="120" fill="url(#gl1)"/><ellipse cx="1395" cy="640" rx="90" ry="110" fill="url(#gl1)"/><ellipse cx="1060" cy="650" rx="110" ry="70" fill="url(#gl1)"/><ellipse cx="1560" cy="820" rx="110" ry="60" fill="url(#gl1)"/><ellipse cx="1680" cy="600" rx="60" ry="110" fill="url(#gl1)"/><ellipse cx="1156" cy="545" rx="90" ry="80" fill="url(#gl2)"/><ellipse cx="1555" cy="668" rx="80" ry="75" fill="url(#gl2)"/><ellipse cx="1270" cy="700" rx="70" ry="60" fill="url(#gl2)"/><ellipse cx="1480" cy="520" rx="70" ry="50" fill="url(#gl2)"/></g>
<g clip-path="url(#ctp)"><ellipse cx="1373" cy="416" rx="115" ry="34" fill="url(#gl3)" transform="rotate(13.5 1373 416)"/><ellipse cx="1520" cy="425" rx="80" ry="14" fill="url(#gl1)" transform="rotate(13.5 1520 425)"/><ellipse cx="1120" cy="345" rx="70" ry="16" fill="url(#gl1)" transform="rotate(13.5 1120 345)"/><ellipse cx="1700" cy="500" rx="40" ry="30" fill="url(#gl2)"/></g>
<path d="M1021,303.7 L1035,369 L1739.5,544" fill="none" stroke="#000030" stroke-width="1.2"/>
<path d="M1035,369 L944.5,718" fill="none" stroke="#000030" stroke-width="1.2"/>
<path d="M1297.4,385.8 L1433.3,418.1 L1449.2,450 L1311.1,418.3 Z" fill="#000050"/>
<path d="M1301.5,388.6 L1432.4,419.8 L1446.2,446.4 L1314,414.5 Z" fill="url(#sl)"/>
<ellipse cx="1374" cy="416" rx="26" ry="3.2" fill="url(#hot)" transform="rotate(14 1374 416)"/>
<path d="M1311.1,418.3 L1449.2,450" fill="none" stroke="#000030" stroke-width="1.6" stroke-dasharray="5 2"/>
<path d="M1297.4,385.8 L1311.1,418.3" fill="none" stroke="#000028" stroke-width="1.5"/>
<path d="M1297.4,385.8 L1433.3,418.1" fill="none" stroke="#000040" stroke-width="1"/>
<line x1="1022.5" y1="299.3" x2="1677" y2="462.2" stroke="#8a8a8a" stroke-width="1"/>
<line x1="1156" y1="327" x2="1155.5" y2="332" stroke="#707070" stroke-width="1"/>
<line x1="1417" y1="392" x2="1416.5" y2="397" stroke="#707070" stroke-width="1"/>
<line x1="1676.5" y1="456" x2="1676" y2="462" stroke="#707070" stroke-width="1"/>
<line x1="1699" y1="472.5" x2="1761" y2="548" stroke="#707070" stroke-width="1"/>
<line x1="1716" y1="492.5" x2="1711" y2="509" stroke="#707070" stroke-width="1"/>
<line x1="1741" y1="521" x2="1737" y2="540" stroke="#707070" stroke-width="1"/>
<line x1="1076.5" y1="751" x2="1081" y2="772.5" stroke="#707070" stroke-width="1"/>
<line x1="1705" y1="662.5" x2="1721" y2="684.5" stroke="#707070" stroke-width="1"/>
<line x1="1666" y1="797.5" x2="1680" y2="819.5" stroke="#707070" stroke-width="1"/>
<line x1="1620" y1="879" x2="1631" y2="900" stroke="#707070" stroke-width="1"/>
<line x1="1351.5" y1="816.5" x2="1359.5" y2="837.5" stroke="#707070" stroke-width="1"/>
<line x1="934" y1="673" x2="940" y2="676" stroke="#707070" stroke-width="1"/>
<line x1="938" y1="711" x2="944" y2="714" stroke="#707070" stroke-width="1"/>
<rect x="1828.5" y="331.5" width="18" height="554" fill="url(#jet)" stroke="#202020" stroke-width="1"/>
<line x1="1828" y1="388.0" x2="1832" y2="388.0" stroke="#202020" stroke-width="1"/>
<line x1="1843" y1="388.0" x2="1847" y2="388.0" stroke="#202020" stroke-width="1"/>
<text x="1856.5" y="394.0" font-family="'DejaVu Sans','Liberation Sans',sans-serif" font-size="15.5" fill="#1a1a1a" textLength="24.5" lengthAdjust="spacing">0.5</text>
<line x1="1828" y1="487.75" x2="1832" y2="487.75" stroke="#202020" stroke-width="1"/>
<line x1="1843" y1="487.75" x2="1847" y2="487.75" stroke="#202020" stroke-width="1"/>
<text x="1856.5" y="493.75" font-family="'DejaVu Sans','Liberation Sans',sans-serif" font-size="15.5" fill="#1a1a1a" textLength="24.5" lengthAdjust="spacing">0.4</text>
<line x1="1828" y1="587.5" x2="1832" y2="587.5" stroke="#202020" stroke-width="1"/>
<line x1="1843" y1="587.5" x2="1847" y2="587.5" stroke="#202020" stroke-width="1"/>
<text x="1856.5" y="593.5" font-family="'DejaVu Sans','Liberation Sans',sans-serif" font-size="15.5" fill="#1a1a1a" textLength="24.5" lengthAdjust="spacing">0.3</text>
<line x1="1828" y1="687.25" x2="1832" y2="687.25" stroke="#202020" stroke-width="1"/>
<line x1="1843" y1="687.25" x2="1847" y2="687.25" stroke="#202020" stroke-width="1"/>
<text x="1856.5" y="693.25" font-family="'DejaVu Sans','Liberation Sans',sans-serif" font-size="15.5" fill="#1a1a1a" textLength="24.5" lengthAdjust="spacing">0.2</text>
<line x1="1828" y1="787.0" x2="1832" y2="787.0" stroke="#202020" stroke-width="1"/>
<line x1="1843" y1="787.0" x2="1847" y2="787.0" stroke="#202020" stroke-width="1"/>
<text x="1856.5" y="793.0" font-family="'DejaVu Sans','Liberation Sans',sans-serif" font-size="15.5" fill="#1a1a1a" textLength="24.5" lengthAdjust="spacing">0.1</text>
<text x="1139.5" y="278" font-family="'DejaVu Sans','Liberation Sans',sans-serif" font-size="15.5" fill="#1a1a1a" textLength="149.5" lengthAdjust="spacing">freq(36)=71000 Hz</text>
<text x="1304" y="278" font-family="'DejaVu Sans','Liberation Sans',sans-serif" font-size="15.5" fill="#1a1a1a" textLength="249.0" lengthAdjust="spacing">Surface: von Mises stress (MPa)</text>
<text x="1728" y="484.5" font-family="'DejaVu Sans','Liberation Sans',sans-serif" font-size="15.5" fill="#1a1a1a" textLength="19.0" lengthAdjust="spacing">10</text>
<text x="1768" y="483.5" font-family="'DejaVu Sans','Liberation Sans',sans-serif" font-size="14" fill="#1a1a1a" textLength="26.0" lengthAdjust="spacing">mm</text>
<text x="1754" y="515" font-family="'DejaVu Sans','Liberation Sans',sans-serif" font-size="15.5" fill="#1a1a1a">0</text>
<text x="1773" y="562" font-family="'DejaVu Sans','Liberation Sans',sans-serif" font-size="15.5" fill="#1a1a1a">0</text>
<text x="1732" y="699" font-family="'DejaVu Sans','Liberation Sans',sans-serif" font-size="15.5" fill="#1a1a1a" textLength="24.0" lengthAdjust="spacing">-10</text>
<text x="1758" y="743.5" font-family="'DejaVu Sans','Liberation Sans',sans-serif" font-size="14" fill="#1a1a1a" textLength="26.0" lengthAdjust="spacing">mm</text>
<text x="1692" y="832.5" font-family="'DejaVu Sans','Liberation Sans',sans-serif" font-size="15.5" fill="#1a1a1a" textLength="24.0" lengthAdjust="spacing">-20</text>
<text x="1617" y="929" font-family="'DejaVu Sans','Liberation Sans',sans-serif" font-size="15.5" fill="#1a1a1a" textLength="24.0" lengthAdjust="spacing">-20</text>
<text x="1351" y="865" font-family="'DejaVu Sans','Liberation Sans',sans-serif" font-size="15.5" fill="#1a1a1a">0</text>
<text x="1268" y="883" font-family="'DejaVu Sans','Liberation Sans',sans-serif" font-size="14" fill="#1a1a1a" textLength="26.0" lengthAdjust="spacing">mm</text>
<text x="1066.5" y="799" font-family="'DejaVu Sans','Liberation Sans',sans-serif" font-size="15.5" fill="#1a1a1a" textLength="19.5" lengthAdjust="spacing">20</text>
<text x="900.7" y="833.5" font-family="'DejaVu Sans','Liberation Sans',sans-serif" font-size="15.5" fill="#1a1a1a">z</text>
<text x="841.8" y="865.2" font-family="'DejaVu Sans','Liberation Sans',sans-serif" font-size="15.5" fill="#1a1a1a">y</text>
<text x="881.8" y="867.3" font-family="'DejaVu Sans','Liberation Sans',sans-serif" font-size="15.5" fill="#303030">x</text>
<line x1="891.9" y1="874.9" x2="898.2" y2="849" stroke="#3f7fbf" stroke-width="1.9"/>
<path d="M894.6,848.6 L900.7,840 L901.4,850.6 Z" fill="#3f7fbf"/>
<line x1="891.9" y1="874.9" x2="865" y2="868.6" stroke="#4aa53a" stroke-width="1.9"/>
<path d="M866.3,865.2 L856,866.4 L864.6,872.4 Z" fill="#4aa53a"/>
<path d="M888.2,864.9 L891.6,866.8 V870.8 L888.2,872.7 L884.8,870.8 V866.8 Z" fill="#e8185a"/>
<g opacity=".95"><path d="M1884.5,262 L1893,254.5 L1906.5,256.5 L1908.5,268 L1900,274.5 L1886.5,272 Z" fill="#e9ebf0" opacity=".85"/></g>
<g transform="translate(1888.3 258.6) scale(1.38)"><rect x="-1.6" y="-1.6" width="15" height="12.2" rx="4" fill="#dfe6f6" opacity=".75"/><rect x="0" y="0" width="11.8" height="9" rx="2.4" fill="url(#clb)"/><path d="M1.9,1.4 L8.6,4.2 L9.4,6.6 L1.9,8 Z" fill="url(#cl)"/><path d="M6,5.2 L10.6,4 V8 L5.5,8.2 Z" fill="#4a9ae0" opacity=".75"/></g>
<path d="M195.0,776.2 C201.9,776.2 206.8,775.7 216.5,777.6 C226.2,779.5 240.8,782.9 253.0,787.4 C265.2,791.9 279.6,798.6 289.6,804.7 C299.7,810.8 307.5,817.4 313.3,823.9 C319.1,830.4 322.3,838.2 324.3,844.0 C326.3,849.8 325.8,853.1 325.2,858.6 C324.6,864.1 323.5,870.8 320.6,876.9 C317.7,883.0 313.1,889.7 307.9,895.2 C302.7,900.7 297.2,905.2 289.6,909.8 C282.0,914.4 271.3,919.1 262.2,922.6 C253.1,926.1 245.2,928.6 234.8,931.0 C224.4,933.4 209.1,935.9 200.0,937.0 C190.9,938.1 185.3,937.7 180.0,937.6 C174.7,937.5 173.6,937.2 167.9,936.5 C162.2,935.8 152.6,934.6 145.9,933.5 C139.2,932.4 133.8,931.7 127.7,929.9 C121.6,928.1 114.9,925.0 109.4,922.6 C103.9,920.2 99.7,918.0 94.8,915.3 C89.9,912.5 84.5,909.5 80.2,906.1 C75.9,902.8 72.2,898.6 69.2,895.2 C66.2,891.9 64.0,889.0 61.9,886.0 C59.8,883.0 57.9,880.2 56.4,876.9 C54.9,873.5 53.5,869.5 52.8,865.9 C52.0,862.2 51.8,858.6 51.9,855.0 C52.0,851.4 52.6,847.6 53.7,844.0 C54.8,840.4 56.6,836.5 58.3,833.1 C60.0,829.8 61.3,827.2 63.7,823.9 C66.1,820.5 69.9,816.2 72.9,813.0 C76.0,809.8 78.3,807.5 82.0,804.7 C85.7,802.0 89.0,799.4 94.8,796.5 C100.6,793.6 110.6,789.6 116.7,787.4 C122.8,785.2 125.8,784.6 131.3,783.4 C136.8,782.2 142.3,781.1 149.6,780.1 C156.9,779.1 167.6,778.1 175.2,777.5 C182.8,776.9 188.1,776.2 195.0,776.2 Z" fill="none" stroke="#de1f2b" stroke-width="5.0" stroke-linejoin="round"/>
<path d="M512.3,591.0 C500.4,590.7 488.6,592.5 476.7,595.1 C464.8,597.7 451.5,602.2 441.1,606.7 C430.7,611.2 422.5,615.9 414.5,621.8 C406.5,627.7 398.3,635.3 393.1,642.3 C387.9,649.3 385.0,657.4 383.3,663.6 C381.6,669.8 381.8,673.4 382.8,679.6 C383.9,685.8 385.8,694.2 389.6,701.0 C393.4,707.8 398.5,714.6 405.6,720.5 C412.7,726.4 422.8,731.9 432.3,736.5 C441.8,741.1 452.1,745.4 462.5,748.1 C472.9,750.8 484.7,752.3 494.5,752.9 C504.3,753.5 512.3,753.0 521.2,751.6 C530.1,750.2 539.0,747.8 547.9,744.5 C556.8,741.2 566.6,736.8 574.6,732.1 C582.6,727.4 589.4,722.2 595.9,716.1 C602.4,710.0 609.1,702.3 613.7,695.6 C618.3,688.9 621.8,682.0 623.5,676.1 C625.2,670.2 625.0,665.6 624.0,660.0 C623.0,654.4 621.0,648.2 617.2,642.3 C613.4,636.4 607.4,629.9 601.2,624.5 C595.0,619.1 588.8,614.8 579.9,610.2 C571.0,605.6 559.2,600.1 547.9,596.9 C536.6,593.7 524.2,591.3 512.3,591.0 Z" fill="none" stroke="#de1f2b" stroke-width="4.7" stroke-linejoin="round"/>
</svg>
</body></html>
